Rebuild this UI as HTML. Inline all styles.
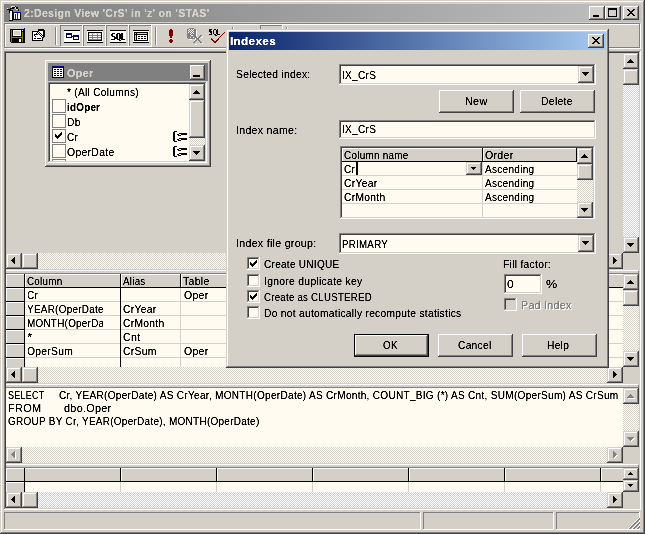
<!DOCTYPE html>
<html><head><meta charset="utf-8"><style>
html,body{margin:0;padding:0;width:645px;height:534px;overflow:hidden;background:#d4d0c8}
#r{position:relative;width:645px;height:534px;overflow:hidden}
#r div{position:absolute}
#r .t{font-family:"Liberation Sans",sans-serif;font-size:11px;line-height:13px;white-space:pre;filter:url(#th);letter-spacing:0.3px}
</style></head><body><svg width="0" height="0" style="position:absolute"><filter id="th" x="0" y="0" width="100%" height="100%"><feComponentTransfer><feFuncA type="linear" slope="2" intercept="-0.25"/></feComponentTransfer></filter></svg><div id="r">
<div style="left:0px;top:0px;width:645px;height:534px;background:#d4d0c8;"></div>
<div style="left:0px;top:0px;width:645px;height:1px;background:#d4d0c8;"></div>
<div style="left:0px;top:0px;width:1px;height:534px;background:#d4d0c8;"></div>
<div style="left:0px;top:533px;width:645px;height:1px;background:#404040;"></div>
<div style="left:644px;top:0px;width:1px;height:534px;background:#404040;"></div>
<div style="left:1px;top:1px;width:643px;height:1px;background:#ffffff;"></div>
<div style="left:1px;top:1px;width:1px;height:532px;background:#ffffff;"></div>
<div style="left:1px;top:532px;width:643px;height:1px;background:#808080;"></div>
<div style="left:643px;top:1px;width:1px;height:532px;background:#808080;"></div>
<div style="left:4px;top:4px;width:637px;height:18px;background:;background:linear-gradient(to right,#808080,#c0c0c0);"></div>
<div class="t" style="left:24.0px;top:7px;color:#d4d0c8;font-weight:bold;transform:scaleX(0.9614);transform-origin:0 0;">2:Design View 'CrS' in 'z' on 'STAS'</div>
<div style="left:589px;top:6px;width:16px;height:14px;background:#d4d0c8;"></div>
<div style="left:589px;top:6px;width:16px;height:1px;background:#ffffff;"></div>
<div style="left:589px;top:6px;width:1px;height:14px;background:#ffffff;"></div>
<div style="left:589px;top:19px;width:16px;height:1px;background:#404040;"></div>
<div style="left:604px;top:6px;width:1px;height:14px;background:#404040;"></div>
<div style="left:590px;top:7px;width:14px;height:1px;background:#d4d0c8;"></div>
<div style="left:590px;top:7px;width:1px;height:12px;background:#d4d0c8;"></div>
<div style="left:590px;top:18px;width:14px;height:1px;background:#808080;"></div>
<div style="left:603px;top:7px;width:1px;height:12px;background:#808080;"></div>
<div style="left:605px;top:6px;width:16px;height:14px;background:#d4d0c8;"></div>
<div style="left:605px;top:6px;width:16px;height:1px;background:#ffffff;"></div>
<div style="left:605px;top:6px;width:1px;height:14px;background:#ffffff;"></div>
<div style="left:605px;top:19px;width:16px;height:1px;background:#404040;"></div>
<div style="left:620px;top:6px;width:1px;height:14px;background:#404040;"></div>
<div style="left:606px;top:7px;width:14px;height:1px;background:#d4d0c8;"></div>
<div style="left:606px;top:7px;width:1px;height:12px;background:#d4d0c8;"></div>
<div style="left:606px;top:18px;width:14px;height:1px;background:#808080;"></div>
<div style="left:619px;top:7px;width:1px;height:12px;background:#808080;"></div>
<div style="left:623px;top:6px;width:16px;height:14px;background:#d4d0c8;"></div>
<div style="left:623px;top:6px;width:16px;height:1px;background:#ffffff;"></div>
<div style="left:623px;top:6px;width:1px;height:14px;background:#ffffff;"></div>
<div style="left:623px;top:19px;width:16px;height:1px;background:#404040;"></div>
<div style="left:638px;top:6px;width:1px;height:14px;background:#404040;"></div>
<div style="left:624px;top:7px;width:14px;height:1px;background:#d4d0c8;"></div>
<div style="left:624px;top:7px;width:1px;height:12px;background:#d4d0c8;"></div>
<div style="left:624px;top:18px;width:14px;height:1px;background:#808080;"></div>
<div style="left:637px;top:7px;width:1px;height:12px;background:#808080;"></div>
<div style="left:593px;top:15px;width:6px;height:2px;background:#000;"></div>
<div style="left:608px;top:8px;width:9px;height:1px;background:#000;"></div>
<div style="left:608px;top:8px;width:1px;height:9px;background:#000;"></div>
<div style="left:608px;top:16px;width:9px;height:1px;background:#000;"></div>
<div style="left:616px;top:8px;width:1px;height:9px;background:#000;"></div>
<div style="left:608px;top:9px;width:9px;height:1px;background:#000;"></div>
<div style="left:627px;top:9px;width:2px;height:1px;background:#000;"></div>
<div style="left:633px;top:9px;width:2px;height:1px;background:#000;"></div>
<div style="left:628px;top:10px;width:2px;height:1px;background:#000;"></div>
<div style="left:632px;top:10px;width:2px;height:1px;background:#000;"></div>
<div style="left:629px;top:11px;width:2px;height:1px;background:#000;"></div>
<div style="left:631px;top:11px;width:2px;height:1px;background:#000;"></div>
<div style="left:630px;top:12px;width:2px;height:1px;background:#000;"></div>
<div style="left:630px;top:12px;width:2px;height:1px;background:#000;"></div>
<div style="left:631px;top:13px;width:2px;height:1px;background:#000;"></div>
<div style="left:629px;top:13px;width:2px;height:1px;background:#000;"></div>
<div style="left:632px;top:14px;width:2px;height:1px;background:#000;"></div>
<div style="left:628px;top:14px;width:2px;height:1px;background:#000;"></div>
<div style="left:633px;top:15px;width:2px;height:1px;background:#000;"></div>
<div style="left:627px;top:15px;width:2px;height:1px;background:#000;"></div>
<div style="left:9px;top:10px;width:4px;height:11px;background:#000;"></div>
<div style="left:10px;top:11px;width:2px;height:9px;background:#ffffff;"></div>
<div style="left:9px;top:13px;width:1px;height:7px;background:#808000;"></div>
<div style="left:13px;top:12px;width:8px;height:8px;background:#000;"></div>
<div style="left:14px;top:13px;width:6px;height:6px;background:#ffffff;"></div>
<div style="left:13px;top:12px;width:8px;height:1px;background:#000080;"></div>
<div style="left:15px;top:14px;width:1px;height:5px;background:#800000;"></div>
<div style="left:17px;top:13px;width:1px;height:6px;background:#800000;"></div>
<div style="left:7px;top:9px;width:4px;height:1px;background:#000;"></div>
<div style="left:10px;top:8px;width:4px;height:1px;background:#000;"></div>
<div style="left:12px;top:7px;width:3px;height:1px;background:#000;"></div>
<div style="left:14px;top:6px;width:2px;height:1px;background:#000;"></div>
<div style="left:16px;top:7px;width:2px;height:2px;background:#000;"></div>
<div style="left:18px;top:9px;width:1px;height:2px;background:#000;"></div>
<div style="left:11px;top:6px;width:4px;height:1px;background:#e0e0e0;"></div>
<div style="left:11px;top:7px;width:1px;height:1px;background:#e0e0e0;"></div>
<div style="left:15px;top:7px;width:1px;height:2px;background:#e0e0e0;"></div>
<div style="left:16px;top:9px;width:2px;height:1px;background:#e0e0e0;"></div>
<div style="left:7px;top:8px;width:1px;height:1px;background:#ffffff;"></div>
<div style="left:5px;top:24px;width:636px;height:1px;background:#ffffff;"></div>
<div style="left:5px;top:24px;width:1px;height:25px;background:#ffffff;"></div>
<div style="left:5px;top:48px;width:636px;height:1px;background:#ffffff;"></div>
<div style="left:640px;top:24px;width:1px;height:25px;background:#ffffff;"></div>
<div style="left:4px;top:23px;width:636px;height:1px;background:#808080;"></div>
<div style="left:4px;top:23px;width:1px;height:25px;background:#808080;"></div>
<div style="left:4px;top:47px;width:636px;height:1px;background:#808080;"></div>
<div style="left:639px;top:23px;width:1px;height:25px;background:#808080;"></div>
<div style="left:55px;top:27px;width:1px;height:18px;background:#808080;"></div>
<div style="left:56px;top:27px;width:1px;height:18px;background:#ffffff;"></div>
<div style="left:155px;top:27px;width:1px;height:18px;background:#808080;"></div>
<div style="left:156px;top:27px;width:1px;height:18px;background:#ffffff;"></div>
<div style="left:60px;top:25px;width:23px;height:1px;background:#808080;"></div>
<div style="left:60px;top:25px;width:1px;height:22px;background:#808080;"></div>
<div style="left:60px;top:46px;width:23px;height:1px;background:#ffffff;"></div>
<div style="left:82px;top:25px;width:1px;height:22px;background:#ffffff;"></div>
<div style="left:83px;top:25px;width:23px;height:1px;background:#808080;"></div>
<div style="left:83px;top:25px;width:1px;height:22px;background:#808080;"></div>
<div style="left:83px;top:46px;width:23px;height:1px;background:#ffffff;"></div>
<div style="left:105px;top:25px;width:1px;height:22px;background:#ffffff;"></div>
<div style="left:106px;top:25px;width:23px;height:1px;background:#808080;"></div>
<div style="left:106px;top:25px;width:1px;height:22px;background:#808080;"></div>
<div style="left:106px;top:46px;width:23px;height:1px;background:#ffffff;"></div>
<div style="left:128px;top:25px;width:1px;height:22px;background:#ffffff;"></div>
<div style="left:129px;top:25px;width:23px;height:1px;background:#808080;"></div>
<div style="left:129px;top:25px;width:1px;height:22px;background:#808080;"></div>
<div style="left:129px;top:46px;width:23px;height:1px;background:#ffffff;"></div>
<div style="left:151px;top:25px;width:1px;height:22px;background:#ffffff;"></div>
<div style="left:10px;top:29px;width:15px;height:13px;background:#000;"></div>
<div style="left:11px;top:42px;width:14px;height:1px;background:#000;"></div>
<div style="left:11px;top:30px;width:1px;height:12px;background:#808000;"></div>
<div style="left:22px;top:32px;width:1px;height:10px;background:#808000;"></div>
<div style="left:12px;top:37px;width:10px;height:1px;background:#808000;"></div>
<div style="left:13px;top:30px;width:8px;height:6px;background:#ffffff;"></div>
<div style="left:14px;top:31px;width:6px;height:4px;background:#d4d0c8;"></div>
<div style="left:22px;top:30px;width:1px;height:1px;background:#ffffff;"></div>
<div style="left:24px;top:28px;width:1px;height:2px;background:#0000c0;"></div>
<div style="left:19px;top:39px;width:2px;height:3px;background:#ffffff;"></div>
<div style="left:32px;top:31px;width:11px;height:10px;background:#000;"></div>
<div style="left:33px;top:32px;width:9px;height:8px;background:#ffffff;"></div>
<div style="left:38px;top:29px;width:6px;height:2px;background:#000;"></div>
<div style="left:44px;top:30px;width:1px;height:7px;background:#000;"></div>
<div style="left:38px;top:31px;width:6px;height:6px;background:#ffffff;"></div>
<div style="left:34px;top:35px;width:1px;height:1px;background:#000;"></div>
<div style="left:35px;top:34px;width:1px;height:1px;background:#000;"></div>
<div style="left:36px;top:33px;width:1px;height:1px;background:#000;"></div>
<div style="left:37px;top:32px;width:1px;height:1px;background:#000;"></div>
<div style="left:38px;top:31px;width:1px;height:1px;background:#000;"></div>
<div style="left:39px;top:32px;width:1px;height:1px;background:#000;"></div>
<div style="left:40px;top:33px;width:1px;height:1px;background:#000;"></div>
<div style="left:41px;top:34px;width:1px;height:1px;background:#000;"></div>
<div style="left:42px;top:35px;width:1px;height:1px;background:#000;"></div>
<div style="left:35px;top:36px;width:1px;height:1px;background:#000;"></div>
<div style="left:34px;top:34px;width:1px;height:1px;background:#000;"></div>
<div style="left:36px;top:34px;width:1px;height:1px;background:#000;"></div>
<div style="left:38px;top:33px;width:1px;height:1px;background:#000;"></div>
<div style="left:37px;top:34px;width:1px;height:1px;background:#000;"></div>
<div style="left:40px;top:35px;width:1px;height:1px;background:#000;"></div>
<div style="left:41px;top:36px;width:1px;height:1px;background:#000;"></div>
<div style="left:39px;top:34px;width:1px;height:1px;background:#000;"></div>
<div style="left:42px;top:37px;width:2px;height:1px;background:#000;"></div>
<div style="left:43px;top:31px;width:1px;height:6px;background:#000;"></div>
<div style="left:34px;top:38px;width:2px;height:1px;background:#000;"></div>
<div style="left:37px;top:38px;width:4px;height:1px;background:#000;"></div>
<div style="left:64px;top:30px;width:16px;height:1px;background:#000;"></div>
<div style="left:64px;top:42px;width:16px;height:1px;background:#000;"></div>
<div style="left:64px;top:31px;width:16px;height:11px;background:#ffffff;"></div>
<div style="left:66px;top:33px;width:6px;height:5px;background:#000;"></div>
<div style="left:67px;top:35px;width:4px;height:2px;background:#ffffff;"></div>
<div style="left:66px;top:33px;width:6px;height:2px;background:#000080;"></div>
<div style="left:73px;top:35px;width:6px;height:5px;background:#000;"></div>
<div style="left:74px;top:37px;width:4px;height:2px;background:#ffffff;"></div>
<div style="left:73px;top:35px;width:6px;height:2px;background:#000080;"></div>
<div style="left:72px;top:36px;width:1px;height:1px;background:#000;"></div>
<div style="left:87px;top:30px;width:16px;height:1px;background:#000;"></div>
<div style="left:87px;top:42px;width:16px;height:1px;background:#000;"></div>
<div style="left:87px;top:31px;width:16px;height:11px;background:#ffffff;"></div>
<div style="left:88px;top:32px;width:14px;height:9px;background:#000;"></div>
<div style="left:89px;top:33px;width:12px;height:7px;background:#808080;"></div>
<div style="left:89px;top:33px;width:12px;height:1px;background:#d4d0c8;"></div>
<div style="left:89px;top:34px;width:3px;height:1px;background:#ffffff;"></div>
<div style="left:93px;top:34px;width:4px;height:1px;background:#ffffff;"></div>
<div style="left:98px;top:34px;width:3px;height:1px;background:#ffffff;"></div>
<div style="left:89px;top:36px;width:3px;height:1px;background:#ffffff;"></div>
<div style="left:93px;top:36px;width:4px;height:1px;background:#ffffff;"></div>
<div style="left:98px;top:36px;width:3px;height:1px;background:#ffffff;"></div>
<div style="left:89px;top:38px;width:3px;height:1px;background:#ffffff;"></div>
<div style="left:93px;top:38px;width:4px;height:1px;background:#ffffff;"></div>
<div style="left:98px;top:38px;width:3px;height:1px;background:#ffffff;"></div>
<div style="left:90px;top:33px;width:1px;height:1px;background:#ffffff;"></div>
<div style="left:95px;top:33px;width:1px;height:1px;background:#ffffff;"></div>
<div style="left:99px;top:33px;width:1px;height:1px;background:#ffffff;"></div>
<div style="left:110px;top:30px;width:16px;height:1px;background:#000;"></div>
<div style="left:110px;top:42px;width:16px;height:1px;background:#000;"></div>
<div style="left:110px;top:31px;width:16px;height:11px;background:#ffffff;"></div>
<div style="left:112px;top:33px;width:3px;height:1px;background:#000;"></div>
<div style="left:111px;top:34px;width:2px;height:2px;background:#000;"></div>
<div style="left:112px;top:36px;width:3px;height:1px;background:#000;"></div>
<div style="left:114px;top:37px;width:2px;height:2px;background:#000;"></div>
<div style="left:111px;top:39px;width:4px;height:1px;background:#000;"></div>
<div style="left:117px;top:33px;width:3px;height:1px;background:#000;"></div>
<div style="left:116px;top:34px;width:2px;height:5px;background:#000;"></div>
<div style="left:119px;top:34px;width:2px;height:5px;background:#000;"></div>
<div style="left:117px;top:39px;width:3px;height:1px;background:#000;"></div>
<div style="left:119px;top:40px;width:2px;height:1px;background:#000;"></div>
<div style="left:121px;top:33px;width:2px;height:7px;background:#000;"></div>
<div style="left:121px;top:39px;width:4px;height:1px;background:#000;"></div>
<div style="left:133px;top:30px;width:16px;height:1px;background:#000;"></div>
<div style="left:133px;top:42px;width:16px;height:1px;background:#000;"></div>
<div style="left:133px;top:31px;width:16px;height:11px;background:#ffffff;"></div>
<div style="left:134px;top:32px;width:14px;height:9px;background:#000;"></div>
<div style="left:137px;top:35px;width:10px;height:5px;background:#ffffff;"></div>
<div style="left:135px;top:33px;width:1px;height:1px;background:#d4d0c8;"></div>
<div style="left:137px;top:33px;width:10px;height:1px;background:#d4d0c8;"></div>
<div style="left:135px;top:35px;width:1px;height:5px;background:#d4d0c8;"></div>
<div style="left:138px;top:36px;width:2px;height:1px;background:#000;"></div>
<div style="left:141px;top:36px;width:2px;height:1px;background:#000;"></div>
<div style="left:144px;top:36px;width:2px;height:1px;background:#000;"></div>
<div style="left:138px;top:38px;width:2px;height:1px;background:#000;"></div>
<div style="left:141px;top:38px;width:2px;height:1px;background:#000;"></div>
<div style="left:144px;top:38px;width:2px;height:1px;background:#000;"></div>
<div style="left:170px;top:29px;width:2px;height:1px;background:#800000;"></div>
<div style="left:169px;top:30px;width:4px;height:6px;background:#800000;"></div>
<div style="left:170px;top:36px;width:2px;height:2px;background:#800000;"></div>
<div style="left:170px;top:39px;width:2px;height:1px;background:#800000;"></div>
<div style="left:169px;top:40px;width:4px;height:2px;background:#800000;"></div>
<div style="left:170px;top:42px;width:2px;height:1px;background:#800000;"></div>
<div style="left:189px;top:28px;width:5px;height:1px;background:#808080;"></div>
<div style="left:187px;top:29px;width:9px;height:9px;background:#808080;"></div>
<div style="left:188px;top:38px;width:7px;height:1px;background:#808080;"></div>
<div style="left:189px;top:29px;width:1px;height:1px;background:#ffffff;"></div>
<div style="left:191px;top:29px;width:1px;height:1px;background:#ffffff;"></div>
<div style="left:193px;top:29px;width:1px;height:1px;background:#ffffff;"></div>
<div style="left:188px;top:30px;width:1px;height:1px;background:#ffffff;"></div>
<div style="left:190px;top:30px;width:1px;height:1px;background:#ffffff;"></div>
<div style="left:192px;top:30px;width:1px;height:1px;background:#ffffff;"></div>
<div style="left:189px;top:31px;width:1px;height:1px;background:#ffffff;"></div>
<div style="left:191px;top:31px;width:1px;height:1px;background:#ffffff;"></div>
<div style="left:193px;top:31px;width:1px;height:1px;background:#ffffff;"></div>
<div style="left:188px;top:32px;width:1px;height:1px;background:#ffffff;"></div>
<div style="left:190px;top:32px;width:1px;height:1px;background:#ffffff;"></div>
<div style="left:192px;top:32px;width:1px;height:1px;background:#ffffff;"></div>
<div style="left:191px;top:33px;width:1px;height:1px;background:#ffffff;"></div>
<div style="left:193px;top:33px;width:1px;height:1px;background:#ffffff;"></div>
<div style="left:190px;top:34px;width:1px;height:1px;background:#ffffff;"></div>
<div style="left:190px;top:37px;width:1px;height:1px;background:#ffffff;"></div>
<div style="left:193px;top:37px;width:1px;height:1px;background:#ffffff;"></div>
<div style="left:191px;top:35px;width:3px;height:1px;background:#ffffff;"></div>
<div style="left:193px;top:35px;width:2px;height:1px;background:#808080;"></div>
<div style="left:200px;top:35px;width:2px;height:1px;background:#808080;"></div>
<div style="left:194px;top:36px;width:2px;height:1px;background:#808080;"></div>
<div style="left:199px;top:36px;width:2px;height:1px;background:#808080;"></div>
<div style="left:195px;top:37px;width:2px;height:1px;background:#808080;"></div>
<div style="left:198px;top:37px;width:2px;height:1px;background:#808080;"></div>
<div style="left:196px;top:38px;width:2px;height:1px;background:#808080;"></div>
<div style="left:197px;top:38px;width:2px;height:1px;background:#808080;"></div>
<div style="left:197px;top:39px;width:2px;height:1px;background:#808080;"></div>
<div style="left:196px;top:39px;width:2px;height:1px;background:#808080;"></div>
<div style="left:198px;top:40px;width:2px;height:1px;background:#808080;"></div>
<div style="left:195px;top:40px;width:2px;height:1px;background:#808080;"></div>
<div style="left:199px;top:41px;width:2px;height:1px;background:#808080;"></div>
<div style="left:194px;top:41px;width:2px;height:1px;background:#808080;"></div>
<div style="left:200px;top:42px;width:2px;height:1px;background:#808080;"></div>
<div style="left:193px;top:42px;width:2px;height:1px;background:#808080;"></div>
<div style="left:196px;top:30px;width:1px;height:6px;background:#ffffff;"></div>
<div style="left:195px;top:38px;width:1px;height:2px;background:#ffffff;"></div>
<div style="left:202px;top:36px;width:1px;height:1px;background:#ffffff;"></div>
<div style="left:201px;top:37px;width:1px;height:1px;background:#ffffff;"></div>
<div style="left:202px;top:43px;width:1px;height:1px;background:#ffffff;"></div>
<div style="left:195px;top:44px;width:2px;height:1px;background:#ffffff;"></div>
<div style="left:189px;top:39px;width:3px;height:1px;background:#ffffff;"></div>
<div style="left:197px;top:37px;width:1px;height:1px;background:#ffffff;"></div>
<div style="left:194px;top:40px;width:1px;height:1px;background:#ffffff;"></div>
<div style="left:209px;top:29px;width:3px;height:1px;background:#000;"></div>
<div style="left:209px;top:30px;width:2px;height:1px;background:#000;"></div>
<div style="left:209px;top:31px;width:3px;height:1px;background:#000;"></div>
<div style="left:211px;top:32px;width:1px;height:2px;background:#000;"></div>
<div style="left:210px;top:32px;width:1px;height:1px;background:#000;"></div>
<div style="left:209px;top:34px;width:3px;height:1px;background:#000;"></div>
<div style="left:214px;top:29px;width:2px;height:1px;background:#000;"></div>
<div style="left:213px;top:30px;width:1px;height:4px;background:#000;"></div>
<div style="left:216px;top:30px;width:1px;height:4px;background:#000;"></div>
<div style="left:214px;top:34px;width:2px;height:1px;background:#000;"></div>
<div style="left:215px;top:35px;width:2px;height:1px;background:#000;"></div>
<div style="left:217px;top:29px;width:1px;height:6px;background:#000;"></div>
<div style="left:218px;top:34px;width:2px;height:1px;background:#000;"></div>
<div style="left:211px;top:38px;width:1px;height:1px;background:#800000;"></div>
<div style="left:211px;top:39px;width:2px;height:1px;background:#800000;"></div>
<div style="left:212px;top:40px;width:2px;height:1px;background:#800000;"></div>
<div style="left:213px;top:41px;width:2px;height:1px;background:#800000;"></div>
<div style="left:214px;top:42px;width:2px;height:1px;background:#800000;"></div>
<div style="left:215px;top:41px;width:2px;height:1px;background:#800000;"></div>
<div style="left:216px;top:40px;width:2px;height:1px;background:#800000;"></div>
<div style="left:217px;top:39px;width:2px;height:1px;background:#800000;"></div>
<div style="left:218px;top:38px;width:1px;height:1px;background:#800000;"></div>
<div style="left:219px;top:37px;width:1px;height:1px;background:#800000;"></div>
<div style="left:220px;top:36px;width:1px;height:1px;background:#800000;"></div>
<div style="left:221px;top:35px;width:1px;height:1px;background:#800000;"></div>
<div style="left:222px;top:34px;width:1px;height:1px;background:#800000;"></div>
<div style="left:223px;top:33px;width:1px;height:1px;background:#800000;"></div>
<div style="left:224px;top:32px;width:1px;height:1px;background:#800000;"></div>
<div style="left:232px;top:27px;width:1px;height:2px;background:#808080;"></div>
<div style="left:286px;top:27px;width:1px;height:2px;background:#808080;"></div>
<div style="left:233px;top:27px;width:1px;height:2px;background:#ffffff;"></div>
<div style="left:287px;top:27px;width:1px;height:2px;background:#ffffff;"></div>
<div style="left:260px;top:25px;width:23px;height:1px;background:#808080;"></div>
<div style="left:260px;top:25px;width:1px;height:22px;background:#808080;"></div>
<div style="left:260px;top:46px;width:23px;height:1px;background:#ffffff;"></div>
<div style="left:282px;top:25px;width:1px;height:22px;background:#ffffff;"></div>
<div style="left:4px;top:51px;width:1px;height:459px;background:#808080;"></div>
<div style="left:4px;top:51px;width:637px;height:1px;background:#808080;"></div>
<div style="left:5px;top:52px;width:1px;height:457px;background:#404040;"></div>
<div style="left:5px;top:52px;width:635px;height:1px;background:#404040;"></div>
<div style="left:639px;top:52px;width:1px;height:457px;background:#d4d0c8;"></div>
<div style="left:5px;top:508px;width:635px;height:1px;background:#d4d0c8;"></div>
<div style="left:640px;top:51px;width:1px;height:459px;background:#ffffff;"></div>
<div style="left:4px;top:509px;width:637px;height:1px;background:#ffffff;"></div>
<div style="left:6px;top:53px;width:633px;height:216px;background:#d4d0c8;"></div>
<div style="left:623px;top:53px;width:16px;height:200px;background:#ffffff;background-image:conic-gradient(#d4d0c8 25%,#fff 0 50%,#d4d0c8 0 75%,#fff 0);background-size:2px 2px;"></div>
<div style="left:623px;top:53px;width:16px;height:16px;background:#d4d0c8;"></div>
<div style="left:623px;top:53px;width:16px;height:1px;background:#d4d0c8;"></div>
<div style="left:623px;top:53px;width:1px;height:16px;background:#d4d0c8;"></div>
<div style="left:623px;top:68px;width:16px;height:1px;background:#404040;"></div>
<div style="left:638px;top:53px;width:1px;height:16px;background:#404040;"></div>
<div style="left:624px;top:54px;width:14px;height:1px;background:#ffffff;"></div>
<div style="left:624px;top:54px;width:1px;height:14px;background:#ffffff;"></div>
<div style="left:624px;top:67px;width:14px;height:1px;background:#808080;"></div>
<div style="left:637px;top:54px;width:1px;height:14px;background:#808080;"></div>
<div style="left:623px;top:237px;width:16px;height:16px;background:#d4d0c8;"></div>
<div style="left:623px;top:237px;width:16px;height:1px;background:#d4d0c8;"></div>
<div style="left:623px;top:237px;width:1px;height:16px;background:#d4d0c8;"></div>
<div style="left:623px;top:252px;width:16px;height:1px;background:#404040;"></div>
<div style="left:638px;top:237px;width:1px;height:16px;background:#404040;"></div>
<div style="left:624px;top:238px;width:14px;height:1px;background:#ffffff;"></div>
<div style="left:624px;top:238px;width:1px;height:14px;background:#ffffff;"></div>
<div style="left:624px;top:251px;width:14px;height:1px;background:#808080;"></div>
<div style="left:637px;top:238px;width:1px;height:14px;background:#808080;"></div>
<div style="left:630px;top:59px;width:1px;height:1px;background:#000;"></div>
<div style="left:629px;top:60px;width:3px;height:1px;background:#000;"></div>
<div style="left:628px;top:61px;width:5px;height:1px;background:#000;"></div>
<div style="left:627px;top:62px;width:7px;height:1px;background:#000;"></div>
<div style="left:627px;top:243px;width:7px;height:1px;background:#000;"></div>
<div style="left:628px;top:244px;width:5px;height:1px;background:#000;"></div>
<div style="left:629px;top:245px;width:3px;height:1px;background:#000;"></div>
<div style="left:630px;top:246px;width:1px;height:1px;background:#000;"></div>
<div style="left:623px;top:69px;width:16px;height:16px;background:#d4d0c8;"></div>
<div style="left:623px;top:69px;width:16px;height:1px;background:#d4d0c8;"></div>
<div style="left:623px;top:69px;width:1px;height:16px;background:#d4d0c8;"></div>
<div style="left:623px;top:84px;width:16px;height:1px;background:#404040;"></div>
<div style="left:638px;top:69px;width:1px;height:16px;background:#404040;"></div>
<div style="left:624px;top:70px;width:14px;height:1px;background:#ffffff;"></div>
<div style="left:624px;top:70px;width:1px;height:14px;background:#ffffff;"></div>
<div style="left:624px;top:83px;width:14px;height:1px;background:#808080;"></div>
<div style="left:637px;top:70px;width:1px;height:14px;background:#808080;"></div>
<div style="left:6px;top:253px;width:617px;height:16px;background:#ffffff;background-image:conic-gradient(#d4d0c8 25%,#fff 0 50%,#d4d0c8 0 75%,#fff 0);background-size:2px 2px;"></div>
<div style="left:6px;top:253px;width:16px;height:16px;background:#d4d0c8;"></div>
<div style="left:6px;top:253px;width:16px;height:1px;background:#d4d0c8;"></div>
<div style="left:6px;top:253px;width:1px;height:16px;background:#d4d0c8;"></div>
<div style="left:6px;top:268px;width:16px;height:1px;background:#404040;"></div>
<div style="left:21px;top:253px;width:1px;height:16px;background:#404040;"></div>
<div style="left:7px;top:254px;width:14px;height:1px;background:#ffffff;"></div>
<div style="left:7px;top:254px;width:1px;height:14px;background:#ffffff;"></div>
<div style="left:7px;top:267px;width:14px;height:1px;background:#808080;"></div>
<div style="left:20px;top:254px;width:1px;height:14px;background:#808080;"></div>
<div style="left:607px;top:253px;width:16px;height:16px;background:#d4d0c8;"></div>
<div style="left:607px;top:253px;width:16px;height:1px;background:#d4d0c8;"></div>
<div style="left:607px;top:253px;width:1px;height:16px;background:#d4d0c8;"></div>
<div style="left:607px;top:268px;width:16px;height:1px;background:#404040;"></div>
<div style="left:622px;top:253px;width:1px;height:16px;background:#404040;"></div>
<div style="left:608px;top:254px;width:14px;height:1px;background:#ffffff;"></div>
<div style="left:608px;top:254px;width:1px;height:14px;background:#ffffff;"></div>
<div style="left:608px;top:267px;width:14px;height:1px;background:#808080;"></div>
<div style="left:621px;top:254px;width:1px;height:14px;background:#808080;"></div>
<div style="left:11px;top:260px;width:1px;height:1px;background:#000;"></div>
<div style="left:12px;top:259px;width:1px;height:3px;background:#000;"></div>
<div style="left:13px;top:258px;width:1px;height:5px;background:#000;"></div>
<div style="left:14px;top:257px;width:1px;height:7px;background:#000;"></div>
<div style="left:613px;top:257px;width:1px;height:7px;background:#000;"></div>
<div style="left:614px;top:258px;width:1px;height:5px;background:#000;"></div>
<div style="left:615px;top:259px;width:1px;height:3px;background:#000;"></div>
<div style="left:616px;top:260px;width:1px;height:1px;background:#000;"></div>
<div style="left:22px;top:253px;width:16px;height:16px;background:#d4d0c8;"></div>
<div style="left:22px;top:253px;width:16px;height:1px;background:#d4d0c8;"></div>
<div style="left:22px;top:253px;width:1px;height:16px;background:#d4d0c8;"></div>
<div style="left:22px;top:268px;width:16px;height:1px;background:#404040;"></div>
<div style="left:37px;top:253px;width:1px;height:16px;background:#404040;"></div>
<div style="left:23px;top:254px;width:14px;height:1px;background:#ffffff;"></div>
<div style="left:23px;top:254px;width:1px;height:14px;background:#ffffff;"></div>
<div style="left:23px;top:267px;width:14px;height:1px;background:#808080;"></div>
<div style="left:36px;top:254px;width:1px;height:14px;background:#808080;"></div>
<div style="left:6px;top:269px;width:633px;height:5px;background:#d4d0c8;"></div>
<div style="left:6px;top:270px;width:632px;height:1px;background:#ffffff;"></div>
<div style="left:6px;top:273px;width:632px;height:1px;background:#808080;"></div>
<div style="left:638px;top:271px;width:1px;height:3px;background:#808080;"></div>
<div style="left:45px;top:60px;width:166px;height:107px;background:#d4d0c8;"></div>
<div style="left:45px;top:60px;width:166px;height:1px;background:#ffffff;"></div>
<div style="left:45px;top:60px;width:1px;height:107px;background:#ffffff;"></div>
<div style="left:45px;top:166px;width:166px;height:1px;background:#404040;"></div>
<div style="left:210px;top:60px;width:1px;height:107px;background:#404040;"></div>
<div style="left:46px;top:61px;width:164px;height:1px;background:#d4d0c8;"></div>
<div style="left:46px;top:61px;width:1px;height:105px;background:#d4d0c8;"></div>
<div style="left:46px;top:165px;width:164px;height:1px;background:#808080;"></div>
<div style="left:209px;top:61px;width:1px;height:105px;background:#808080;"></div>
<div style="left:48px;top:63px;width:160px;height:18px;background:#808080;"></div>
<div style="left:52px;top:66px;width:12px;height:12px;background:#000;"></div>
<div style="left:52px;top:66px;width:12px;height:2px;background:#000080;"></div>
<div style="left:53px;top:68px;width:10px;height:9px;background:#ffffff;"></div>
<div style="left:54px;top:69px;width:2px;height:1px;background:#000;"></div>
<div style="left:57px;top:69px;width:2px;height:1px;background:#000;"></div>
<div style="left:60px;top:69px;width:2px;height:1px;background:#000;"></div>
<div style="left:54px;top:71px;width:2px;height:1px;background:#000;"></div>
<div style="left:57px;top:71px;width:2px;height:1px;background:#000;"></div>
<div style="left:60px;top:71px;width:2px;height:1px;background:#000;"></div>
<div style="left:54px;top:73px;width:2px;height:1px;background:#000;"></div>
<div style="left:57px;top:73px;width:2px;height:1px;background:#000;"></div>
<div style="left:60px;top:73px;width:2px;height:1px;background:#000;"></div>
<div style="left:54px;top:75px;width:2px;height:1px;background:#000;"></div>
<div style="left:57px;top:75px;width:2px;height:1px;background:#000;"></div>
<div style="left:60px;top:75px;width:2px;height:1px;background:#000;"></div>
<div class="t" style="left:67.0px;top:67px;color:#d4d0c8;font-weight:bold;transform:scaleX(0.9860);transform-origin:0 0;">Oper</div>
<div style="left:190px;top:65px;width:15px;height:15px;background:#d4d0c8;"></div>
<div style="left:190px;top:65px;width:15px;height:1px;background:#ffffff;"></div>
<div style="left:190px;top:65px;width:1px;height:15px;background:#ffffff;"></div>
<div style="left:190px;top:79px;width:15px;height:1px;background:#404040;"></div>
<div style="left:204px;top:65px;width:1px;height:15px;background:#404040;"></div>
<div style="left:191px;top:66px;width:13px;height:1px;background:#d4d0c8;"></div>
<div style="left:191px;top:66px;width:1px;height:13px;background:#d4d0c8;"></div>
<div style="left:191px;top:78px;width:13px;height:1px;background:#808080;"></div>
<div style="left:203px;top:66px;width:1px;height:13px;background:#808080;"></div>
<div style="left:193px;top:75px;width:7px;height:2px;background:#000;"></div>
<div style="left:48px;top:82px;width:159px;height:81px;background:#fffbf0;"></div>
<div style="left:48px;top:82px;width:159px;height:1px;background:#808080;"></div>
<div style="left:48px;top:82px;width:1px;height:81px;background:#808080;"></div>
<div style="left:48px;top:162px;width:159px;height:1px;background:#ffffff;"></div>
<div style="left:206px;top:82px;width:1px;height:81px;background:#ffffff;"></div>
<div style="left:49px;top:83px;width:157px;height:1px;background:#404040;"></div>
<div style="left:49px;top:83px;width:1px;height:79px;background:#404040;"></div>
<div style="left:49px;top:161px;width:157px;height:1px;background:#d4d0c8;"></div>
<div style="left:205px;top:83px;width:1px;height:79px;background:#d4d0c8;"></div>
<div style="left:189px;top:84px;width:16px;height:77px;background:#ffffff;background-image:conic-gradient(#d4d0c8 25%,#fff 0 50%,#d4d0c8 0 75%,#fff 0);background-size:2px 2px;"></div>
<div style="left:189px;top:84px;width:16px;height:16px;background:#d4d0c8;"></div>
<div style="left:189px;top:84px;width:16px;height:1px;background:#d4d0c8;"></div>
<div style="left:189px;top:84px;width:1px;height:16px;background:#d4d0c8;"></div>
<div style="left:189px;top:99px;width:16px;height:1px;background:#404040;"></div>
<div style="left:204px;top:84px;width:1px;height:16px;background:#404040;"></div>
<div style="left:190px;top:85px;width:14px;height:1px;background:#ffffff;"></div>
<div style="left:190px;top:85px;width:1px;height:14px;background:#ffffff;"></div>
<div style="left:190px;top:98px;width:14px;height:1px;background:#808080;"></div>
<div style="left:203px;top:85px;width:1px;height:14px;background:#808080;"></div>
<div style="left:189px;top:145px;width:16px;height:16px;background:#d4d0c8;"></div>
<div style="left:189px;top:145px;width:16px;height:1px;background:#d4d0c8;"></div>
<div style="left:189px;top:145px;width:1px;height:16px;background:#d4d0c8;"></div>
<div style="left:189px;top:160px;width:16px;height:1px;background:#404040;"></div>
<div style="left:204px;top:145px;width:1px;height:16px;background:#404040;"></div>
<div style="left:190px;top:146px;width:14px;height:1px;background:#ffffff;"></div>
<div style="left:190px;top:146px;width:1px;height:14px;background:#ffffff;"></div>
<div style="left:190px;top:159px;width:14px;height:1px;background:#808080;"></div>
<div style="left:203px;top:146px;width:1px;height:14px;background:#808080;"></div>
<div style="left:196px;top:90px;width:1px;height:1px;background:#000;"></div>
<div style="left:195px;top:91px;width:3px;height:1px;background:#000;"></div>
<div style="left:194px;top:92px;width:5px;height:1px;background:#000;"></div>
<div style="left:193px;top:93px;width:7px;height:1px;background:#000;"></div>
<div style="left:193px;top:151px;width:7px;height:1px;background:#000;"></div>
<div style="left:194px;top:152px;width:5px;height:1px;background:#000;"></div>
<div style="left:195px;top:153px;width:3px;height:1px;background:#000;"></div>
<div style="left:196px;top:154px;width:1px;height:1px;background:#000;"></div>
<div style="left:189px;top:100px;width:16px;height:38px;background:#d4d0c8;"></div>
<div style="left:189px;top:100px;width:16px;height:1px;background:#d4d0c8;"></div>
<div style="left:189px;top:100px;width:1px;height:38px;background:#d4d0c8;"></div>
<div style="left:189px;top:137px;width:16px;height:1px;background:#404040;"></div>
<div style="left:204px;top:100px;width:1px;height:38px;background:#404040;"></div>
<div style="left:190px;top:101px;width:14px;height:1px;background:#ffffff;"></div>
<div style="left:190px;top:101px;width:1px;height:36px;background:#ffffff;"></div>
<div style="left:190px;top:136px;width:14px;height:1px;background:#808080;"></div>
<div style="left:203px;top:101px;width:1px;height:36px;background:#808080;"></div>
<div class="t" style="left:67.0px;top:86px;color:#000;transform:scaleX(0.9235);transform-origin:0 0;">* (All Columns)</div>
<div style="left:52px;top:99px;width:14px;height:1px;background:#808080;"></div>
<div style="left:52px;top:99px;width:1px;height:14px;background:#808080;"></div>
<div style="left:52px;top:112px;width:14px;height:1px;background:#808080;"></div>
<div style="left:65px;top:99px;width:1px;height:14px;background:#808080;"></div>
<div class="t" style="left:67.0px;top:101px;color:#000;font-weight:bold;transform:scaleX(0.8913);transform-origin:0 0;">idOper</div>
<div style="left:52px;top:114px;width:14px;height:1px;background:#808080;"></div>
<div style="left:52px;top:114px;width:1px;height:14px;background:#808080;"></div>
<div style="left:52px;top:127px;width:14px;height:1px;background:#808080;"></div>
<div style="left:65px;top:114px;width:1px;height:14px;background:#808080;"></div>
<div class="t" style="left:67.0px;top:116px;color:#000;transform:scaleX(0.9338);transform-origin:0 0;">Db</div>
<div style="left:52px;top:129px;width:14px;height:1px;background:#808080;"></div>
<div style="left:52px;top:129px;width:1px;height:14px;background:#808080;"></div>
<div style="left:52px;top:142px;width:14px;height:1px;background:#808080;"></div>
<div style="left:65px;top:129px;width:1px;height:14px;background:#808080;"></div>
<div style="left:61px;top:132px;width:1px;height:1px;background:#000;"></div>
<div style="left:60px;top:133px;width:1px;height:1px;background:#000;"></div>
<div style="left:61px;top:133px;width:1px;height:1px;background:#000;"></div>
<div style="left:55px;top:134px;width:1px;height:1px;background:#000;"></div>
<div style="left:59px;top:134px;width:1px;height:1px;background:#000;"></div>
<div style="left:60px;top:134px;width:1px;height:1px;background:#000;"></div>
<div style="left:61px;top:134px;width:1px;height:1px;background:#000;"></div>
<div style="left:55px;top:135px;width:1px;height:1px;background:#000;"></div>
<div style="left:56px;top:135px;width:1px;height:1px;background:#000;"></div>
<div style="left:58px;top:135px;width:1px;height:1px;background:#000;"></div>
<div style="left:59px;top:135px;width:1px;height:1px;background:#000;"></div>
<div style="left:60px;top:135px;width:1px;height:1px;background:#000;"></div>
<div style="left:55px;top:136px;width:1px;height:1px;background:#000;"></div>
<div style="left:56px;top:136px;width:1px;height:1px;background:#000;"></div>
<div style="left:57px;top:136px;width:1px;height:1px;background:#000;"></div>
<div style="left:58px;top:136px;width:1px;height:1px;background:#000;"></div>
<div style="left:59px;top:136px;width:1px;height:1px;background:#000;"></div>
<div style="left:56px;top:137px;width:1px;height:1px;background:#000;"></div>
<div style="left:57px;top:137px;width:1px;height:1px;background:#000;"></div>
<div style="left:58px;top:137px;width:1px;height:1px;background:#000;"></div>
<div style="left:57px;top:138px;width:1px;height:1px;background:#000;"></div>
<div class="t" style="left:67.0px;top:131px;color:#000;transform:scaleX(0.9084);transform-origin:0 0;">Cr</div>
<div style="left:52px;top:144px;width:14px;height:1px;background:#808080;"></div>
<div style="left:52px;top:144px;width:1px;height:14px;background:#808080;"></div>
<div style="left:52px;top:157px;width:14px;height:1px;background:#808080;"></div>
<div style="left:65px;top:144px;width:1px;height:14px;background:#808080;"></div>
<div class="t" style="left:67.0px;top:146px;color:#000;transform:scaleX(0.9482);transform-origin:0 0;">OperDate</div>
<div style="left:52px;top:159px;width:14px;height:1px;background:#808080;"></div>
<div style="left:52px;top:160px;width:1px;height:1px;background:#808080;"></div>
<div style="left:65px;top:160px;width:1px;height:1px;background:#808080;"></div>
<div style="left:173px;top:132px;width:1px;height:9px;background:#000;"></div>
<div style="left:174px;top:131px;width:1px;height:11px;background:#000;"></div>
<div style="left:175px;top:131px;width:2px;height:1px;background:#000;"></div>
<div style="left:175px;top:141px;width:2px;height:1px;background:#000;"></div>
<div style="left:179px;top:133px;width:2px;height:1px;background:#000;"></div>
<div style="left:177px;top:134px;width:2px;height:1px;background:#000;"></div>
<div style="left:178px;top:135px;width:3px;height:1px;background:#000;"></div>
<div style="left:181px;top:133px;width:6px;height:2px;background:#000;"></div>
<div style="left:179px;top:138px;width:2px;height:1px;background:#000;"></div>
<div style="left:177px;top:139px;width:2px;height:1px;background:#000;"></div>
<div style="left:178px;top:140px;width:3px;height:1px;background:#000;"></div>
<div style="left:181px;top:138px;width:6px;height:2px;background:#000;"></div>
<div style="left:173px;top:147px;width:1px;height:9px;background:#000;"></div>
<div style="left:174px;top:146px;width:1px;height:11px;background:#000;"></div>
<div style="left:175px;top:146px;width:2px;height:1px;background:#000;"></div>
<div style="left:175px;top:156px;width:2px;height:1px;background:#000;"></div>
<div style="left:179px;top:148px;width:2px;height:1px;background:#000;"></div>
<div style="left:177px;top:149px;width:2px;height:1px;background:#000;"></div>
<div style="left:178px;top:150px;width:3px;height:1px;background:#000;"></div>
<div style="left:181px;top:148px;width:6px;height:2px;background:#000;"></div>
<div style="left:179px;top:153px;width:2px;height:1px;background:#000;"></div>
<div style="left:177px;top:154px;width:2px;height:1px;background:#000;"></div>
<div style="left:178px;top:155px;width:3px;height:1px;background:#000;"></div>
<div style="left:181px;top:153px;width:6px;height:2px;background:#000;"></div>
<div style="left:6px;top:274px;width:633px;height:109px;background:#fffbf0;"></div>
<div style="left:623px;top:274px;width:16px;height:93px;background:#ffffff;background-image:conic-gradient(#d4d0c8 25%,#fff 0 50%,#d4d0c8 0 75%,#fff 0);background-size:2px 2px;"></div>
<div style="left:623px;top:274px;width:16px;height:16px;background:#d4d0c8;"></div>
<div style="left:623px;top:274px;width:16px;height:1px;background:#d4d0c8;"></div>
<div style="left:623px;top:274px;width:1px;height:16px;background:#d4d0c8;"></div>
<div style="left:623px;top:289px;width:16px;height:1px;background:#404040;"></div>
<div style="left:638px;top:274px;width:1px;height:16px;background:#404040;"></div>
<div style="left:624px;top:275px;width:14px;height:1px;background:#ffffff;"></div>
<div style="left:624px;top:275px;width:1px;height:14px;background:#ffffff;"></div>
<div style="left:624px;top:288px;width:14px;height:1px;background:#808080;"></div>
<div style="left:637px;top:275px;width:1px;height:14px;background:#808080;"></div>
<div style="left:623px;top:351px;width:16px;height:16px;background:#d4d0c8;"></div>
<div style="left:623px;top:351px;width:16px;height:1px;background:#d4d0c8;"></div>
<div style="left:623px;top:351px;width:1px;height:16px;background:#d4d0c8;"></div>
<div style="left:623px;top:366px;width:16px;height:1px;background:#404040;"></div>
<div style="left:638px;top:351px;width:1px;height:16px;background:#404040;"></div>
<div style="left:624px;top:352px;width:14px;height:1px;background:#ffffff;"></div>
<div style="left:624px;top:352px;width:1px;height:14px;background:#ffffff;"></div>
<div style="left:624px;top:365px;width:14px;height:1px;background:#808080;"></div>
<div style="left:637px;top:352px;width:1px;height:14px;background:#808080;"></div>
<div style="left:630px;top:280px;width:1px;height:1px;background:#000;"></div>
<div style="left:629px;top:281px;width:3px;height:1px;background:#000;"></div>
<div style="left:628px;top:282px;width:5px;height:1px;background:#000;"></div>
<div style="left:627px;top:283px;width:7px;height:1px;background:#000;"></div>
<div style="left:627px;top:357px;width:7px;height:1px;background:#000;"></div>
<div style="left:628px;top:358px;width:5px;height:1px;background:#000;"></div>
<div style="left:629px;top:359px;width:3px;height:1px;background:#000;"></div>
<div style="left:630px;top:360px;width:1px;height:1px;background:#000;"></div>
<div style="left:623px;top:290px;width:16px;height:16px;background:#d4d0c8;"></div>
<div style="left:623px;top:290px;width:16px;height:1px;background:#d4d0c8;"></div>
<div style="left:623px;top:290px;width:1px;height:16px;background:#d4d0c8;"></div>
<div style="left:623px;top:305px;width:16px;height:1px;background:#404040;"></div>
<div style="left:638px;top:290px;width:1px;height:16px;background:#404040;"></div>
<div style="left:624px;top:291px;width:14px;height:1px;background:#ffffff;"></div>
<div style="left:624px;top:291px;width:1px;height:14px;background:#ffffff;"></div>
<div style="left:624px;top:304px;width:14px;height:1px;background:#808080;"></div>
<div style="left:637px;top:291px;width:1px;height:14px;background:#808080;"></div>
<div style="left:6px;top:367px;width:617px;height:16px;background:#ffffff;background-image:conic-gradient(#d4d0c8 25%,#fff 0 50%,#d4d0c8 0 75%,#fff 0);background-size:2px 2px;"></div>
<div style="left:6px;top:367px;width:16px;height:16px;background:#d4d0c8;"></div>
<div style="left:6px;top:367px;width:16px;height:1px;background:#d4d0c8;"></div>
<div style="left:6px;top:367px;width:1px;height:16px;background:#d4d0c8;"></div>
<div style="left:6px;top:382px;width:16px;height:1px;background:#404040;"></div>
<div style="left:21px;top:367px;width:1px;height:16px;background:#404040;"></div>
<div style="left:7px;top:368px;width:14px;height:1px;background:#ffffff;"></div>
<div style="left:7px;top:368px;width:1px;height:14px;background:#ffffff;"></div>
<div style="left:7px;top:381px;width:14px;height:1px;background:#808080;"></div>
<div style="left:20px;top:368px;width:1px;height:14px;background:#808080;"></div>
<div style="left:607px;top:367px;width:16px;height:16px;background:#d4d0c8;"></div>
<div style="left:607px;top:367px;width:16px;height:1px;background:#d4d0c8;"></div>
<div style="left:607px;top:367px;width:1px;height:16px;background:#d4d0c8;"></div>
<div style="left:607px;top:382px;width:16px;height:1px;background:#404040;"></div>
<div style="left:622px;top:367px;width:1px;height:16px;background:#404040;"></div>
<div style="left:608px;top:368px;width:14px;height:1px;background:#ffffff;"></div>
<div style="left:608px;top:368px;width:1px;height:14px;background:#ffffff;"></div>
<div style="left:608px;top:381px;width:14px;height:1px;background:#808080;"></div>
<div style="left:621px;top:368px;width:1px;height:14px;background:#808080;"></div>
<div style="left:11px;top:374px;width:1px;height:1px;background:#000;"></div>
<div style="left:12px;top:373px;width:1px;height:3px;background:#000;"></div>
<div style="left:13px;top:372px;width:1px;height:5px;background:#000;"></div>
<div style="left:14px;top:371px;width:1px;height:7px;background:#000;"></div>
<div style="left:613px;top:371px;width:1px;height:7px;background:#000;"></div>
<div style="left:614px;top:372px;width:1px;height:5px;background:#000;"></div>
<div style="left:615px;top:373px;width:1px;height:3px;background:#000;"></div>
<div style="left:616px;top:374px;width:1px;height:1px;background:#000;"></div>
<div style="left:22px;top:367px;width:16px;height:16px;background:#d4d0c8;"></div>
<div style="left:22px;top:367px;width:16px;height:1px;background:#d4d0c8;"></div>
<div style="left:22px;top:367px;width:1px;height:16px;background:#d4d0c8;"></div>
<div style="left:22px;top:382px;width:16px;height:1px;background:#404040;"></div>
<div style="left:37px;top:367px;width:1px;height:16px;background:#404040;"></div>
<div style="left:23px;top:368px;width:14px;height:1px;background:#ffffff;"></div>
<div style="left:23px;top:368px;width:1px;height:14px;background:#ffffff;"></div>
<div style="left:23px;top:381px;width:14px;height:1px;background:#808080;"></div>
<div style="left:36px;top:368px;width:1px;height:14px;background:#808080;"></div>
<div style="left:623px;top:367px;width:16px;height:16px;background:#d4d0c8;"></div>
<div style="left:6px;top:274px;width:617px;height:13px;background:#d4d0c8;"></div>
<div style="left:6px;top:274px;width:617px;height:1px;background:#ffffff;"></div>
<div style="left:6px;top:287px;width:617px;height:1px;background:#000;"></div>
<div style="left:24px;top:274px;width:1px;height:13px;background:#000;"></div>
<div style="left:25px;top:275px;width:1px;height:12px;background:#ffffff;"></div>
<div style="left:120px;top:274px;width:1px;height:13px;background:#000;"></div>
<div style="left:121px;top:275px;width:1px;height:12px;background:#ffffff;"></div>
<div style="left:180px;top:274px;width:1px;height:13px;background:#000;"></div>
<div style="left:181px;top:275px;width:1px;height:12px;background:#ffffff;"></div>
<div style="left:6px;top:275px;width:1px;height:12px;background:#ffffff;"></div>
<div style="left:6px;top:288px;width:18px;height:13px;background:#d4d0c8;"></div>
<div style="left:6px;top:288px;width:18px;height:1px;background:#ffffff;"></div>
<div style="left:6px;top:288px;width:1px;height:13px;background:#ffffff;"></div>
<div style="left:6px;top:301px;width:19px;height:1px;background:#000;"></div>
<div style="left:25px;top:301px;width:598px;height:1px;background:#d4d0c8;"></div>
<div style="left:6px;top:302px;width:18px;height:13px;background:#d4d0c8;"></div>
<div style="left:6px;top:302px;width:18px;height:1px;background:#ffffff;"></div>
<div style="left:6px;top:302px;width:1px;height:13px;background:#ffffff;"></div>
<div style="left:6px;top:315px;width:19px;height:1px;background:#000;"></div>
<div style="left:25px;top:315px;width:598px;height:1px;background:#d4d0c8;"></div>
<div style="left:6px;top:316px;width:18px;height:13px;background:#d4d0c8;"></div>
<div style="left:6px;top:316px;width:18px;height:1px;background:#ffffff;"></div>
<div style="left:6px;top:316px;width:1px;height:13px;background:#ffffff;"></div>
<div style="left:6px;top:329px;width:19px;height:1px;background:#000;"></div>
<div style="left:25px;top:329px;width:598px;height:1px;background:#d4d0c8;"></div>
<div style="left:6px;top:330px;width:18px;height:13px;background:#d4d0c8;"></div>
<div style="left:6px;top:330px;width:18px;height:1px;background:#ffffff;"></div>
<div style="left:6px;top:330px;width:1px;height:13px;background:#ffffff;"></div>
<div style="left:6px;top:343px;width:19px;height:1px;background:#000;"></div>
<div style="left:25px;top:343px;width:598px;height:1px;background:#d4d0c8;"></div>
<div style="left:6px;top:344px;width:18px;height:13px;background:#d4d0c8;"></div>
<div style="left:6px;top:344px;width:18px;height:1px;background:#ffffff;"></div>
<div style="left:6px;top:344px;width:1px;height:13px;background:#ffffff;"></div>
<div style="left:6px;top:357px;width:19px;height:1px;background:#000;"></div>
<div style="left:25px;top:357px;width:598px;height:1px;background:#d4d0c8;"></div>
<div style="left:6px;top:358px;width:18px;height:9px;background:#d4d0c8;"></div>
<div style="left:6px;top:358px;width:18px;height:1px;background:#ffffff;"></div>
<div style="left:6px;top:358px;width:1px;height:9px;background:#ffffff;"></div>
<div style="left:24px;top:288px;width:1px;height:79px;background:#000;"></div>
<div style="left:120px;top:288px;width:1px;height:79px;background:#000;"></div>
<div style="left:180px;top:288px;width:1px;height:79px;background:#d4d0c8;"></div>
<div class="t" style="left:27.0px;top:275px;color:#000;transform:scaleX(0.8938);transform-origin:0 0;">Column</div>
<div class="t" style="left:123.0px;top:275px;color:#000;transform:scaleX(0.8878);transform-origin:0 0;">Alias</div>
<div class="t" style="left:183.0px;top:275px;color:#000;transform:scaleX(0.9533);transform-origin:0 0;">Table</div>
<div style="left:28px;top:289px;width:75px;height:13px;overflow:hidden">
<div class="t" style="left:-1.0px;top:0px;color:#000;transform:scaleX(0.9084);transform-origin:0 0;">Cr</div>
</div>
<div class="t" style="left:184.0px;top:289px;color:#000;transform:scaleX(0.9549);transform-origin:0 0;">Oper</div>
<div style="left:28px;top:303px;width:75px;height:13px;overflow:hidden">
<div class="t" style="left:-1.0px;top:0px;color:#000;transform:scaleX(0.9016);transform-origin:0 0;">YEAR(OperDate</div>
</div>
<div class="t" style="left:123.0px;top:303px;color:#000;transform:scaleX(0.9399);transform-origin:0 0;">CrYear</div>
<div style="left:28px;top:317px;width:75px;height:13px;overflow:hidden">
<div class="t" style="left:-1.0px;top:0px;color:#000;transform:scaleX(0.8982);transform-origin:0 0;">MONTH(OperDate</div>
</div>
<div class="t" style="left:123.0px;top:317px;color:#000;transform:scaleX(0.9372);transform-origin:0 0;">CrMonth</div>
<div style="left:28px;top:331px;width:75px;height:13px;overflow:hidden">
<div class="t" style="left:-1.0px;top:0px;color:#000;transform:scaleX(1.1973);transform-origin:0 0;">*</div>
</div>
<div class="t" style="left:123.0px;top:331px;color:#000;transform:scaleX(0.9694);transform-origin:0 0;">Cnt</div>
<div style="left:28px;top:345px;width:75px;height:13px;overflow:hidden">
<div class="t" style="left:-1.0px;top:0px;color:#000;transform:scaleX(0.9382);transform-origin:0 0;">OperSum</div>
</div>
<div class="t" style="left:123.0px;top:345px;color:#000;transform:scaleX(0.9459);transform-origin:0 0;">CrSum</div>
<div class="t" style="left:184.0px;top:345px;color:#000;transform:scaleX(0.9549);transform-origin:0 0;">Oper</div>
<div style="left:6px;top:383px;width:633px;height:5px;background:#d4d0c8;"></div>
<div style="left:6px;top:384px;width:632px;height:1px;background:#ffffff;"></div>
<div style="left:6px;top:387px;width:632px;height:1px;background:#808080;"></div>
<div style="left:638px;top:385px;width:1px;height:3px;background:#808080;"></div>
<div style="left:6px;top:388px;width:633px;height:75px;background:#fffbf0;"></div>
<div style="left:623px;top:388px;width:16px;height:59px;background:#ffffff;background-image:conic-gradient(#d4d0c8 25%,#fff 0 50%,#d4d0c8 0 75%,#fff 0);background-size:2px 2px;"></div>
<div style="left:623px;top:388px;width:16px;height:16px;background:#d4d0c8;"></div>
<div style="left:623px;top:388px;width:16px;height:1px;background:#d4d0c8;"></div>
<div style="left:623px;top:388px;width:1px;height:16px;background:#d4d0c8;"></div>
<div style="left:623px;top:403px;width:16px;height:1px;background:#404040;"></div>
<div style="left:638px;top:388px;width:1px;height:16px;background:#404040;"></div>
<div style="left:624px;top:389px;width:14px;height:1px;background:#ffffff;"></div>
<div style="left:624px;top:389px;width:1px;height:14px;background:#ffffff;"></div>
<div style="left:624px;top:402px;width:14px;height:1px;background:#808080;"></div>
<div style="left:637px;top:389px;width:1px;height:14px;background:#808080;"></div>
<div style="left:623px;top:431px;width:16px;height:16px;background:#d4d0c8;"></div>
<div style="left:623px;top:431px;width:16px;height:1px;background:#d4d0c8;"></div>
<div style="left:623px;top:431px;width:1px;height:16px;background:#d4d0c8;"></div>
<div style="left:623px;top:446px;width:16px;height:1px;background:#404040;"></div>
<div style="left:638px;top:431px;width:1px;height:16px;background:#404040;"></div>
<div style="left:624px;top:432px;width:14px;height:1px;background:#ffffff;"></div>
<div style="left:624px;top:432px;width:1px;height:14px;background:#ffffff;"></div>
<div style="left:624px;top:445px;width:14px;height:1px;background:#808080;"></div>
<div style="left:637px;top:432px;width:1px;height:14px;background:#808080;"></div>
<div style="left:631px;top:395px;width:1px;height:1px;background:#ffffff;"></div>
<div style="left:630px;top:396px;width:3px;height:1px;background:#ffffff;"></div>
<div style="left:629px;top:397px;width:5px;height:1px;background:#ffffff;"></div>
<div style="left:628px;top:398px;width:7px;height:1px;background:#ffffff;"></div>
<div style="left:630px;top:394px;width:1px;height:1px;background:#808080;"></div>
<div style="left:629px;top:395px;width:3px;height:1px;background:#808080;"></div>
<div style="left:628px;top:396px;width:5px;height:1px;background:#808080;"></div>
<div style="left:627px;top:397px;width:7px;height:1px;background:#808080;"></div>
<div style="left:628px;top:438px;width:7px;height:1px;background:#ffffff;"></div>
<div style="left:629px;top:439px;width:5px;height:1px;background:#ffffff;"></div>
<div style="left:630px;top:440px;width:3px;height:1px;background:#ffffff;"></div>
<div style="left:631px;top:441px;width:1px;height:1px;background:#ffffff;"></div>
<div style="left:627px;top:437px;width:7px;height:1px;background:#808080;"></div>
<div style="left:628px;top:438px;width:5px;height:1px;background:#808080;"></div>
<div style="left:629px;top:439px;width:3px;height:1px;background:#808080;"></div>
<div style="left:630px;top:440px;width:1px;height:1px;background:#808080;"></div>
<div style="left:6px;top:447px;width:617px;height:16px;background:#ffffff;background-image:conic-gradient(#d4d0c8 25%,#fff 0 50%,#d4d0c8 0 75%,#fff 0);background-size:2px 2px;"></div>
<div style="left:6px;top:447px;width:16px;height:16px;background:#d4d0c8;"></div>
<div style="left:6px;top:447px;width:16px;height:1px;background:#d4d0c8;"></div>
<div style="left:6px;top:447px;width:1px;height:16px;background:#d4d0c8;"></div>
<div style="left:6px;top:462px;width:16px;height:1px;background:#404040;"></div>
<div style="left:21px;top:447px;width:1px;height:16px;background:#404040;"></div>
<div style="left:7px;top:448px;width:14px;height:1px;background:#ffffff;"></div>
<div style="left:7px;top:448px;width:1px;height:14px;background:#ffffff;"></div>
<div style="left:7px;top:461px;width:14px;height:1px;background:#808080;"></div>
<div style="left:20px;top:448px;width:1px;height:14px;background:#808080;"></div>
<div style="left:607px;top:447px;width:16px;height:16px;background:#d4d0c8;"></div>
<div style="left:607px;top:447px;width:16px;height:1px;background:#d4d0c8;"></div>
<div style="left:607px;top:447px;width:1px;height:16px;background:#d4d0c8;"></div>
<div style="left:607px;top:462px;width:16px;height:1px;background:#404040;"></div>
<div style="left:622px;top:447px;width:1px;height:16px;background:#404040;"></div>
<div style="left:608px;top:448px;width:14px;height:1px;background:#ffffff;"></div>
<div style="left:608px;top:448px;width:1px;height:14px;background:#ffffff;"></div>
<div style="left:608px;top:461px;width:14px;height:1px;background:#808080;"></div>
<div style="left:621px;top:448px;width:1px;height:14px;background:#808080;"></div>
<div style="left:12px;top:455px;width:1px;height:1px;background:#ffffff;"></div>
<div style="left:13px;top:454px;width:1px;height:3px;background:#ffffff;"></div>
<div style="left:14px;top:453px;width:1px;height:5px;background:#ffffff;"></div>
<div style="left:15px;top:452px;width:1px;height:7px;background:#ffffff;"></div>
<div style="left:11px;top:454px;width:1px;height:1px;background:#808080;"></div>
<div style="left:12px;top:453px;width:1px;height:3px;background:#808080;"></div>
<div style="left:13px;top:452px;width:1px;height:5px;background:#808080;"></div>
<div style="left:14px;top:451px;width:1px;height:7px;background:#808080;"></div>
<div style="left:614px;top:452px;width:1px;height:7px;background:#ffffff;"></div>
<div style="left:615px;top:453px;width:1px;height:5px;background:#ffffff;"></div>
<div style="left:616px;top:454px;width:1px;height:3px;background:#ffffff;"></div>
<div style="left:617px;top:455px;width:1px;height:1px;background:#ffffff;"></div>
<div style="left:613px;top:451px;width:1px;height:7px;background:#808080;"></div>
<div style="left:614px;top:452px;width:1px;height:5px;background:#808080;"></div>
<div style="left:615px;top:453px;width:1px;height:3px;background:#808080;"></div>
<div style="left:616px;top:454px;width:1px;height:1px;background:#808080;"></div>
<div style="left:623px;top:447px;width:16px;height:16px;background:#d4d0c8;"></div>
<div class="t" style="left:8.0px;top:389px;color:#000;transform:scaleX(0.8185);transform-origin:0 0;">SELECT</div>
<div class="t" style="left:59.0px;top:389px;color:#000;transform:scaleX(0.9157);transform-origin:0 0;">Cr, YEAR(OperDate) AS CrYear, MONTH(OperDate) AS CrMonth, COUNT_BIG (*) AS Cnt, SUM(OperSum) AS CrSum</div>
<div class="t" style="left:8.0px;top:402px;color:#000;transform:scaleX(0.9972);transform-origin:0 0;">FROM</div>
<div class="t" style="left:64.0px;top:402px;color:#000;transform:scaleX(0.9841);transform-origin:0 0;">dbo.Oper</div>
<div class="t" style="left:8.0px;top:415px;color:#000;transform:scaleX(0.9071);transform-origin:0 0;">GROUP BY Cr, YEAR(OperDate), MONTH(OperDate)</div>
<div style="left:6px;top:463px;width:633px;height:5px;background:#d4d0c8;"></div>
<div style="left:6px;top:464px;width:632px;height:1px;background:#ffffff;"></div>
<div style="left:6px;top:467px;width:632px;height:1px;background:#808080;"></div>
<div style="left:638px;top:465px;width:1px;height:3px;background:#808080;"></div>
<div style="left:6px;top:468px;width:633px;height:40px;background:#fffbf0;"></div>
<div style="left:6px;top:468px;width:617px;height:13px;background:#d4d0c8;"></div>
<div style="left:6px;top:468px;width:617px;height:1px;background:#ffffff;"></div>
<div style="left:6px;top:468px;width:1px;height:13px;background:#ffffff;"></div>
<div style="left:6px;top:481px;width:617px;height:1px;background:#000;"></div>
<div style="left:6px;top:482px;width:18px;height:10px;background:#d4d0c8;"></div>
<div style="left:6px;top:482px;width:18px;height:1px;background:#ffffff;"></div>
<div style="left:6px;top:482px;width:1px;height:10px;background:#ffffff;"></div>
<div style="left:24px;top:468px;width:1px;height:24px;background:#000;"></div>
<div style="left:120px;top:468px;width:1px;height:13px;background:#000;"></div>
<div style="left:121px;top:469px;width:1px;height:12px;background:#ffffff;"></div>
<div style="left:120px;top:482px;width:1px;height:10px;background:#d4d0c8;"></div>
<div style="left:216px;top:468px;width:1px;height:13px;background:#000;"></div>
<div style="left:217px;top:469px;width:1px;height:12px;background:#ffffff;"></div>
<div style="left:216px;top:482px;width:1px;height:10px;background:#d4d0c8;"></div>
<div style="left:312px;top:468px;width:1px;height:13px;background:#000;"></div>
<div style="left:313px;top:469px;width:1px;height:12px;background:#ffffff;"></div>
<div style="left:312px;top:482px;width:1px;height:10px;background:#d4d0c8;"></div>
<div style="left:408px;top:468px;width:1px;height:13px;background:#000;"></div>
<div style="left:409px;top:469px;width:1px;height:12px;background:#ffffff;"></div>
<div style="left:408px;top:482px;width:1px;height:10px;background:#d4d0c8;"></div>
<div style="left:504px;top:468px;width:1px;height:13px;background:#000;"></div>
<div style="left:505px;top:469px;width:1px;height:12px;background:#ffffff;"></div>
<div style="left:504px;top:482px;width:1px;height:10px;background:#d4d0c8;"></div>
<div style="left:600px;top:468px;width:1px;height:13px;background:#000;"></div>
<div style="left:601px;top:469px;width:1px;height:12px;background:#ffffff;"></div>
<div style="left:600px;top:482px;width:1px;height:10px;background:#d4d0c8;"></div>
<div style="left:623px;top:468px;width:16px;height:12px;background:#d4d0c8;"></div>
<div style="left:623px;top:468px;width:16px;height:1px;background:#d4d0c8;"></div>
<div style="left:623px;top:468px;width:1px;height:12px;background:#d4d0c8;"></div>
<div style="left:623px;top:479px;width:16px;height:1px;background:#404040;"></div>
<div style="left:638px;top:468px;width:1px;height:12px;background:#404040;"></div>
<div style="left:624px;top:469px;width:14px;height:1px;background:#ffffff;"></div>
<div style="left:624px;top:469px;width:1px;height:10px;background:#ffffff;"></div>
<div style="left:624px;top:478px;width:14px;height:1px;background:#808080;"></div>
<div style="left:637px;top:469px;width:1px;height:10px;background:#808080;"></div>
<div style="left:630px;top:472px;width:1px;height:1px;background:#000;"></div>
<div style="left:629px;top:473px;width:3px;height:1px;background:#000;"></div>
<div style="left:628px;top:474px;width:5px;height:1px;background:#000;"></div>
<div style="left:623px;top:480px;width:16px;height:12px;background:#d4d0c8;"></div>
<div style="left:623px;top:480px;width:16px;height:1px;background:#d4d0c8;"></div>
<div style="left:623px;top:480px;width:1px;height:12px;background:#d4d0c8;"></div>
<div style="left:623px;top:491px;width:16px;height:1px;background:#404040;"></div>
<div style="left:638px;top:480px;width:1px;height:12px;background:#404040;"></div>
<div style="left:624px;top:481px;width:14px;height:1px;background:#ffffff;"></div>
<div style="left:624px;top:481px;width:1px;height:10px;background:#ffffff;"></div>
<div style="left:624px;top:490px;width:14px;height:1px;background:#808080;"></div>
<div style="left:637px;top:481px;width:1px;height:10px;background:#808080;"></div>
<div style="left:628px;top:484px;width:5px;height:1px;background:#000;"></div>
<div style="left:629px;top:485px;width:3px;height:1px;background:#000;"></div>
<div style="left:630px;top:486px;width:1px;height:1px;background:#000;"></div>
<div style="left:6px;top:492px;width:617px;height:16px;background:#ffffff;background-image:conic-gradient(#d4d0c8 25%,#fff 0 50%,#d4d0c8 0 75%,#fff 0);background-size:2px 2px;"></div>
<div style="left:6px;top:492px;width:16px;height:16px;background:#d4d0c8;"></div>
<div style="left:6px;top:492px;width:16px;height:1px;background:#d4d0c8;"></div>
<div style="left:6px;top:492px;width:1px;height:16px;background:#d4d0c8;"></div>
<div style="left:6px;top:507px;width:16px;height:1px;background:#404040;"></div>
<div style="left:21px;top:492px;width:1px;height:16px;background:#404040;"></div>
<div style="left:7px;top:493px;width:14px;height:1px;background:#ffffff;"></div>
<div style="left:7px;top:493px;width:1px;height:14px;background:#ffffff;"></div>
<div style="left:7px;top:506px;width:14px;height:1px;background:#808080;"></div>
<div style="left:20px;top:493px;width:1px;height:14px;background:#808080;"></div>
<div style="left:607px;top:492px;width:16px;height:16px;background:#d4d0c8;"></div>
<div style="left:607px;top:492px;width:16px;height:1px;background:#d4d0c8;"></div>
<div style="left:607px;top:492px;width:1px;height:16px;background:#d4d0c8;"></div>
<div style="left:607px;top:507px;width:16px;height:1px;background:#404040;"></div>
<div style="left:622px;top:492px;width:1px;height:16px;background:#404040;"></div>
<div style="left:608px;top:493px;width:14px;height:1px;background:#ffffff;"></div>
<div style="left:608px;top:493px;width:1px;height:14px;background:#ffffff;"></div>
<div style="left:608px;top:506px;width:14px;height:1px;background:#808080;"></div>
<div style="left:621px;top:493px;width:1px;height:14px;background:#808080;"></div>
<div style="left:11px;top:499px;width:1px;height:1px;background:#000;"></div>
<div style="left:12px;top:498px;width:1px;height:3px;background:#000;"></div>
<div style="left:13px;top:497px;width:1px;height:5px;background:#000;"></div>
<div style="left:14px;top:496px;width:1px;height:7px;background:#000;"></div>
<div style="left:613px;top:496px;width:1px;height:7px;background:#000;"></div>
<div style="left:614px;top:497px;width:1px;height:5px;background:#000;"></div>
<div style="left:615px;top:498px;width:1px;height:3px;background:#000;"></div>
<div style="left:616px;top:499px;width:1px;height:1px;background:#000;"></div>
<div style="left:22px;top:492px;width:16px;height:16px;background:#d4d0c8;"></div>
<div style="left:22px;top:492px;width:16px;height:1px;background:#d4d0c8;"></div>
<div style="left:22px;top:492px;width:1px;height:16px;background:#d4d0c8;"></div>
<div style="left:22px;top:507px;width:16px;height:1px;background:#404040;"></div>
<div style="left:37px;top:492px;width:1px;height:16px;background:#404040;"></div>
<div style="left:23px;top:493px;width:14px;height:1px;background:#ffffff;"></div>
<div style="left:23px;top:493px;width:1px;height:14px;background:#ffffff;"></div>
<div style="left:23px;top:506px;width:14px;height:1px;background:#808080;"></div>
<div style="left:36px;top:493px;width:1px;height:14px;background:#808080;"></div>
<div style="left:623px;top:492px;width:16px;height:16px;background:#d4d0c8;"></div>
<div style="left:4px;top:512px;width:417px;height:1px;background:#808080;"></div>
<div style="left:4px;top:512px;width:1px;height:18px;background:#808080;"></div>
<div style="left:4px;top:529px;width:417px;height:1px;background:#ffffff;"></div>
<div style="left:420px;top:512px;width:1px;height:18px;background:#ffffff;"></div>
<div style="left:423px;top:512px;width:131px;height:1px;background:#808080;"></div>
<div style="left:423px;top:512px;width:1px;height:18px;background:#808080;"></div>
<div style="left:423px;top:529px;width:131px;height:1px;background:#ffffff;"></div>
<div style="left:553px;top:512px;width:1px;height:18px;background:#ffffff;"></div>
<div style="left:556px;top:512px;width:84px;height:1px;background:#808080;"></div>
<div style="left:556px;top:512px;width:1px;height:18px;background:#808080;"></div>
<div style="left:556px;top:529px;width:84px;height:1px;background:#ffffff;"></div>
<div style="left:639px;top:512px;width:1px;height:18px;background:#ffffff;"></div>
<div style="left:628px;top:528px;width:1px;height:1px;background:#ffffff;"></div>
<div style="left:629px;top:528px;width:1px;height:1px;background:#808080;"></div>
<div style="left:630px;top:528px;width:1px;height:1px;background:#808080;"></div>
<div style="left:629px;top:527px;width:1px;height:1px;background:#ffffff;"></div>
<div style="left:630px;top:527px;width:1px;height:1px;background:#808080;"></div>
<div style="left:631px;top:527px;width:1px;height:1px;background:#808080;"></div>
<div style="left:630px;top:526px;width:1px;height:1px;background:#ffffff;"></div>
<div style="left:631px;top:526px;width:1px;height:1px;background:#808080;"></div>
<div style="left:632px;top:526px;width:1px;height:1px;background:#808080;"></div>
<div style="left:631px;top:525px;width:1px;height:1px;background:#ffffff;"></div>
<div style="left:632px;top:525px;width:1px;height:1px;background:#808080;"></div>
<div style="left:633px;top:525px;width:1px;height:1px;background:#808080;"></div>
<div style="left:632px;top:524px;width:1px;height:1px;background:#ffffff;"></div>
<div style="left:633px;top:524px;width:1px;height:1px;background:#808080;"></div>
<div style="left:634px;top:524px;width:1px;height:1px;background:#808080;"></div>
<div style="left:633px;top:523px;width:1px;height:1px;background:#ffffff;"></div>
<div style="left:634px;top:523px;width:1px;height:1px;background:#808080;"></div>
<div style="left:635px;top:523px;width:1px;height:1px;background:#808080;"></div>
<div style="left:634px;top:522px;width:1px;height:1px;background:#ffffff;"></div>
<div style="left:635px;top:522px;width:1px;height:1px;background:#808080;"></div>
<div style="left:636px;top:522px;width:1px;height:1px;background:#808080;"></div>
<div style="left:635px;top:521px;width:1px;height:1px;background:#ffffff;"></div>
<div style="left:636px;top:521px;width:1px;height:1px;background:#808080;"></div>
<div style="left:637px;top:521px;width:1px;height:1px;background:#808080;"></div>
<div style="left:636px;top:520px;width:1px;height:1px;background:#ffffff;"></div>
<div style="left:637px;top:520px;width:1px;height:1px;background:#808080;"></div>
<div style="left:638px;top:520px;width:1px;height:1px;background:#808080;"></div>
<div style="left:637px;top:519px;width:1px;height:1px;background:#ffffff;"></div>
<div style="left:638px;top:519px;width:1px;height:1px;background:#808080;"></div>
<div style="left:639px;top:519px;width:1px;height:1px;background:#808080;"></div>
<div style="left:638px;top:518px;width:1px;height:1px;background:#ffffff;"></div>
<div style="left:639px;top:518px;width:1px;height:1px;background:#808080;"></div>
<div style="left:640px;top:518px;width:1px;height:1px;background:#808080;"></div>
<div style="left:639px;top:517px;width:1px;height:1px;background:#ffffff;"></div>
<div style="left:640px;top:517px;width:1px;height:1px;background:#808080;"></div>
<div style="left:641px;top:517px;width:1px;height:1px;background:#808080;"></div>
<div style="left:632px;top:528px;width:1px;height:1px;background:#ffffff;"></div>
<div style="left:633px;top:528px;width:1px;height:1px;background:#808080;"></div>
<div style="left:634px;top:528px;width:1px;height:1px;background:#808080;"></div>
<div style="left:633px;top:527px;width:1px;height:1px;background:#ffffff;"></div>
<div style="left:634px;top:527px;width:1px;height:1px;background:#808080;"></div>
<div style="left:635px;top:527px;width:1px;height:1px;background:#808080;"></div>
<div style="left:634px;top:526px;width:1px;height:1px;background:#ffffff;"></div>
<div style="left:635px;top:526px;width:1px;height:1px;background:#808080;"></div>
<div style="left:636px;top:526px;width:1px;height:1px;background:#808080;"></div>
<div style="left:635px;top:525px;width:1px;height:1px;background:#ffffff;"></div>
<div style="left:636px;top:525px;width:1px;height:1px;background:#808080;"></div>
<div style="left:637px;top:525px;width:1px;height:1px;background:#808080;"></div>
<div style="left:636px;top:524px;width:1px;height:1px;background:#ffffff;"></div>
<div style="left:637px;top:524px;width:1px;height:1px;background:#808080;"></div>
<div style="left:638px;top:524px;width:1px;height:1px;background:#808080;"></div>
<div style="left:637px;top:523px;width:1px;height:1px;background:#ffffff;"></div>
<div style="left:638px;top:523px;width:1px;height:1px;background:#808080;"></div>
<div style="left:639px;top:523px;width:1px;height:1px;background:#808080;"></div>
<div style="left:638px;top:522px;width:1px;height:1px;background:#ffffff;"></div>
<div style="left:639px;top:522px;width:1px;height:1px;background:#808080;"></div>
<div style="left:640px;top:522px;width:1px;height:1px;background:#808080;"></div>
<div style="left:639px;top:521px;width:1px;height:1px;background:#ffffff;"></div>
<div style="left:640px;top:521px;width:1px;height:1px;background:#808080;"></div>
<div style="left:641px;top:521px;width:1px;height:1px;background:#808080;"></div>
<div style="left:636px;top:528px;width:1px;height:1px;background:#ffffff;"></div>
<div style="left:637px;top:528px;width:1px;height:1px;background:#808080;"></div>
<div style="left:638px;top:528px;width:1px;height:1px;background:#808080;"></div>
<div style="left:637px;top:527px;width:1px;height:1px;background:#ffffff;"></div>
<div style="left:638px;top:527px;width:1px;height:1px;background:#808080;"></div>
<div style="left:639px;top:527px;width:1px;height:1px;background:#808080;"></div>
<div style="left:638px;top:526px;width:1px;height:1px;background:#ffffff;"></div>
<div style="left:639px;top:526px;width:1px;height:1px;background:#808080;"></div>
<div style="left:640px;top:526px;width:1px;height:1px;background:#808080;"></div>
<div style="left:639px;top:525px;width:1px;height:1px;background:#ffffff;"></div>
<div style="left:640px;top:525px;width:1px;height:1px;background:#808080;"></div>
<div style="left:641px;top:525px;width:1px;height:1px;background:#808080;"></div>
<div style="left:640px;top:513px;width:2px;height:18px;background:#d4d0c8;"></div>
<div style="left:226px;top:29px;width:383px;height:339px;background:#d4d0c8;"></div>
<div style="left:226px;top:29px;width:383px;height:1px;background:#d4d0c8;"></div>
<div style="left:226px;top:29px;width:1px;height:339px;background:#d4d0c8;"></div>
<div style="left:226px;top:367px;width:383px;height:1px;background:#404040;"></div>
<div style="left:608px;top:29px;width:1px;height:339px;background:#404040;"></div>
<div style="left:227px;top:30px;width:381px;height:1px;background:#ffffff;"></div>
<div style="left:227px;top:30px;width:1px;height:337px;background:#ffffff;"></div>
<div style="left:227px;top:366px;width:381px;height:1px;background:#808080;"></div>
<div style="left:607px;top:30px;width:1px;height:337px;background:#808080;"></div>
<div style="left:229px;top:32px;width:377px;height:18px;background:;background:linear-gradient(to right,#0a246a,#a6caf0);"></div>
<div class="t" style="left:230.0px;top:35px;color:#fff;font-weight:bold;transform:scaleX(1.0701);transform-origin:0 0;">Indexes</div>
<div style="left:588px;top:34px;width:16px;height:14px;background:#d4d0c8;"></div>
<div style="left:588px;top:34px;width:16px;height:1px;background:#ffffff;"></div>
<div style="left:588px;top:34px;width:1px;height:14px;background:#ffffff;"></div>
<div style="left:588px;top:47px;width:16px;height:1px;background:#404040;"></div>
<div style="left:603px;top:34px;width:1px;height:14px;background:#404040;"></div>
<div style="left:589px;top:35px;width:14px;height:1px;background:#d4d0c8;"></div>
<div style="left:589px;top:35px;width:1px;height:12px;background:#d4d0c8;"></div>
<div style="left:589px;top:46px;width:14px;height:1px;background:#808080;"></div>
<div style="left:602px;top:35px;width:1px;height:12px;background:#808080;"></div>
<div style="left:592px;top:37px;width:2px;height:1px;background:#000;"></div>
<div style="left:598px;top:37px;width:2px;height:1px;background:#000;"></div>
<div style="left:593px;top:38px;width:2px;height:1px;background:#000;"></div>
<div style="left:597px;top:38px;width:2px;height:1px;background:#000;"></div>
<div style="left:594px;top:39px;width:2px;height:1px;background:#000;"></div>
<div style="left:596px;top:39px;width:2px;height:1px;background:#000;"></div>
<div style="left:595px;top:40px;width:2px;height:1px;background:#000;"></div>
<div style="left:595px;top:40px;width:2px;height:1px;background:#000;"></div>
<div style="left:596px;top:41px;width:2px;height:1px;background:#000;"></div>
<div style="left:594px;top:41px;width:2px;height:1px;background:#000;"></div>
<div style="left:597px;top:42px;width:2px;height:1px;background:#000;"></div>
<div style="left:593px;top:42px;width:2px;height:1px;background:#000;"></div>
<div style="left:598px;top:43px;width:2px;height:1px;background:#000;"></div>
<div style="left:592px;top:43px;width:2px;height:1px;background:#000;"></div>
<div class="t" style="left:236.0px;top:68px;color:#000;transform:scaleX(0.9345);transform-origin:0 0;">Selected index:</div>
<div style="left:339px;top:64px;width:257px;height:21px;background:#fffbf0;"></div>
<div style="left:339px;top:64px;width:257px;height:1px;background:#808080;"></div>
<div style="left:339px;top:64px;width:1px;height:21px;background:#808080;"></div>
<div style="left:339px;top:84px;width:257px;height:1px;background:#ffffff;"></div>
<div style="left:595px;top:64px;width:1px;height:21px;background:#ffffff;"></div>
<div style="left:340px;top:65px;width:255px;height:1px;background:#404040;"></div>
<div style="left:340px;top:65px;width:1px;height:19px;background:#404040;"></div>
<div style="left:340px;top:83px;width:255px;height:1px;background:#d4d0c8;"></div>
<div style="left:594px;top:65px;width:1px;height:19px;background:#d4d0c8;"></div>
<div class="t" style="left:342.0px;top:69px;color:#000;transform:scaleX(0.9177);transform-origin:0 0;">IX_CrS</div>
<div style="left:578px;top:66px;width:16px;height:17px;background:#d4d0c8;"></div>
<div style="left:578px;top:66px;width:16px;height:1px;background:#d4d0c8;"></div>
<div style="left:578px;top:66px;width:1px;height:17px;background:#d4d0c8;"></div>
<div style="left:578px;top:82px;width:16px;height:1px;background:#404040;"></div>
<div style="left:593px;top:66px;width:1px;height:17px;background:#404040;"></div>
<div style="left:579px;top:67px;width:14px;height:1px;background:#ffffff;"></div>
<div style="left:579px;top:67px;width:1px;height:15px;background:#ffffff;"></div>
<div style="left:579px;top:81px;width:14px;height:1px;background:#808080;"></div>
<div style="left:592px;top:67px;width:1px;height:15px;background:#808080;"></div>
<div style="left:582px;top:72px;width:7px;height:1px;background:#000;"></div>
<div style="left:583px;top:73px;width:5px;height:1px;background:#000;"></div>
<div style="left:584px;top:74px;width:3px;height:1px;background:#000;"></div>
<div style="left:585px;top:75px;width:1px;height:1px;background:#000;"></div>
<div style="left:439px;top:90px;width:75px;height:23px;background:#d4d0c8;"></div>
<div style="left:439px;top:90px;width:75px;height:1px;background:#ffffff;"></div>
<div style="left:439px;top:90px;width:1px;height:23px;background:#ffffff;"></div>
<div style="left:439px;top:112px;width:75px;height:1px;background:#404040;"></div>
<div style="left:513px;top:90px;width:1px;height:23px;background:#404040;"></div>
<div style="left:440px;top:91px;width:73px;height:1px;background:#d4d0c8;"></div>
<div style="left:440px;top:91px;width:1px;height:21px;background:#d4d0c8;"></div>
<div style="left:440px;top:111px;width:73px;height:1px;background:#808080;"></div>
<div style="left:512px;top:91px;width:1px;height:21px;background:#808080;"></div>
<div class="t" style="left:465.0px;top:95px;color:#000;transform:scaleX(0.9823);transform-origin:0 0;">New</div>
<div style="left:520px;top:90px;width:75px;height:23px;background:#d4d0c8;"></div>
<div style="left:520px;top:90px;width:75px;height:1px;background:#ffffff;"></div>
<div style="left:520px;top:90px;width:1px;height:23px;background:#ffffff;"></div>
<div style="left:520px;top:112px;width:75px;height:1px;background:#404040;"></div>
<div style="left:594px;top:90px;width:1px;height:23px;background:#404040;"></div>
<div style="left:521px;top:91px;width:73px;height:1px;background:#d4d0c8;"></div>
<div style="left:521px;top:91px;width:1px;height:21px;background:#d4d0c8;"></div>
<div style="left:521px;top:111px;width:73px;height:1px;background:#808080;"></div>
<div style="left:593px;top:91px;width:1px;height:21px;background:#808080;"></div>
<div class="t" style="left:541.0px;top:95px;color:#000;transform:scaleX(0.9491);transform-origin:0 0;">Delete</div>
<div class="t" style="left:236.0px;top:124px;color:#000;transform:scaleX(0.9633);transform-origin:0 0;">Index name:</div>
<div style="left:339px;top:120px;width:257px;height:19px;background:#fffbf0;"></div>
<div style="left:339px;top:120px;width:257px;height:1px;background:#808080;"></div>
<div style="left:339px;top:120px;width:1px;height:19px;background:#808080;"></div>
<div style="left:339px;top:138px;width:257px;height:1px;background:#ffffff;"></div>
<div style="left:595px;top:120px;width:1px;height:19px;background:#ffffff;"></div>
<div style="left:340px;top:121px;width:255px;height:1px;background:#404040;"></div>
<div style="left:340px;top:121px;width:1px;height:17px;background:#404040;"></div>
<div style="left:340px;top:137px;width:255px;height:1px;background:#d4d0c8;"></div>
<div style="left:594px;top:121px;width:1px;height:17px;background:#d4d0c8;"></div>
<div class="t" style="left:342.0px;top:123px;color:#000;transform:scaleX(0.9177);transform-origin:0 0;">IX_CrS</div>
<div style="left:340px;top:146px;width:255px;height:73px;background:#fffbf0;"></div>
<div style="left:340px;top:146px;width:255px;height:1px;background:#808080;"></div>
<div style="left:340px;top:146px;width:1px;height:73px;background:#808080;"></div>
<div style="left:340px;top:218px;width:255px;height:1px;background:#ffffff;"></div>
<div style="left:594px;top:146px;width:1px;height:73px;background:#ffffff;"></div>
<div style="left:341px;top:147px;width:253px;height:1px;background:#404040;"></div>
<div style="left:341px;top:147px;width:1px;height:71px;background:#404040;"></div>
<div style="left:341px;top:217px;width:253px;height:1px;background:#d4d0c8;"></div>
<div style="left:593px;top:147px;width:1px;height:71px;background:#d4d0c8;"></div>
<div style="left:342px;top:148px;width:235px;height:69px;background:#fffbf0;"></div>
<div style="left:342px;top:148px;width:235px;height:13px;background:#d4d0c8;"></div>
<div style="left:342px;top:148px;width:235px;height:1px;background:#ffffff;"></div>
<div style="left:342px;top:148px;width:1px;height:13px;background:#ffffff;"></div>
<div style="left:342px;top:161px;width:235px;height:1px;background:#000;"></div>
<div style="left:482px;top:148px;width:1px;height:13px;background:#000;"></div>
<div style="left:483px;top:149px;width:1px;height:12px;background:#ffffff;"></div>
<div style="left:576px;top:148px;width:1px;height:14px;background:#000;"></div>
<div style="left:482px;top:162px;width:1px;height:55px;background:#d4d0c8;"></div>
<div style="left:342px;top:175px;width:235px;height:1px;background:#d4d0c8;"></div>
<div style="left:342px;top:189px;width:235px;height:1px;background:#d4d0c8;"></div>
<div style="left:342px;top:203px;width:235px;height:1px;background:#d4d0c8;"></div>
<div class="t" style="left:344.0px;top:149px;color:#000;transform:scaleX(0.8986);transform-origin:0 0;">Column name</div>
<div class="t" style="left:485.0px;top:149px;color:#000;transform:scaleX(0.9620);transform-origin:0 0;">Order</div>
<div class="t" style="left:344.0px;top:163px;color:#000;transform:scaleX(0.9084);transform-origin:0 0;">Cr</div>
<div style="left:356px;top:162px;width:2px;height:13px;background:#000;"></div>
<div style="left:466px;top:162px;width:16px;height:13px;background:#d4d0c8;"></div>
<div style="left:466px;top:162px;width:16px;height:1px;background:#d4d0c8;"></div>
<div style="left:466px;top:162px;width:1px;height:13px;background:#d4d0c8;"></div>
<div style="left:466px;top:174px;width:16px;height:1px;background:#404040;"></div>
<div style="left:481px;top:162px;width:1px;height:13px;background:#404040;"></div>
<div style="left:467px;top:163px;width:14px;height:1px;background:#ffffff;"></div>
<div style="left:467px;top:163px;width:1px;height:11px;background:#ffffff;"></div>
<div style="left:467px;top:173px;width:14px;height:1px;background:#808080;"></div>
<div style="left:480px;top:163px;width:1px;height:11px;background:#808080;"></div>
<div style="left:471px;top:167px;width:5px;height:1px;background:#000;"></div>
<div style="left:472px;top:168px;width:3px;height:1px;background:#000;"></div>
<div style="left:473px;top:169px;width:1px;height:1px;background:#000;"></div>
<div class="t" style="left:344.0px;top:177px;color:#000;transform:scaleX(0.9399);transform-origin:0 0;">CrYear</div>
<div class="t" style="left:344.0px;top:191px;color:#000;transform:scaleX(0.9372);transform-origin:0 0;">CrMonth</div>
<div class="t" style="left:485.0px;top:163px;color:#000;transform:scaleX(0.9153);transform-origin:0 0;">Ascending</div>
<div class="t" style="left:485.0px;top:177px;color:#000;transform:scaleX(0.9153);transform-origin:0 0;">Ascending</div>
<div class="t" style="left:485.0px;top:191px;color:#000;transform:scaleX(0.9153);transform-origin:0 0;">Ascending</div>
<div style="left:577px;top:148px;width:16px;height:70px;background:#ffffff;background-image:conic-gradient(#d4d0c8 25%,#fff 0 50%,#d4d0c8 0 75%,#fff 0);background-size:2px 2px;"></div>
<div style="left:577px;top:148px;width:16px;height:16px;background:#d4d0c8;"></div>
<div style="left:577px;top:148px;width:16px;height:1px;background:#d4d0c8;"></div>
<div style="left:577px;top:148px;width:1px;height:16px;background:#d4d0c8;"></div>
<div style="left:577px;top:163px;width:16px;height:1px;background:#404040;"></div>
<div style="left:592px;top:148px;width:1px;height:16px;background:#404040;"></div>
<div style="left:578px;top:149px;width:14px;height:1px;background:#ffffff;"></div>
<div style="left:578px;top:149px;width:1px;height:14px;background:#ffffff;"></div>
<div style="left:578px;top:162px;width:14px;height:1px;background:#808080;"></div>
<div style="left:591px;top:149px;width:1px;height:14px;background:#808080;"></div>
<div style="left:577px;top:202px;width:16px;height:16px;background:#d4d0c8;"></div>
<div style="left:577px;top:202px;width:16px;height:1px;background:#d4d0c8;"></div>
<div style="left:577px;top:202px;width:1px;height:16px;background:#d4d0c8;"></div>
<div style="left:577px;top:217px;width:16px;height:1px;background:#404040;"></div>
<div style="left:592px;top:202px;width:1px;height:16px;background:#404040;"></div>
<div style="left:578px;top:203px;width:14px;height:1px;background:#ffffff;"></div>
<div style="left:578px;top:203px;width:1px;height:14px;background:#ffffff;"></div>
<div style="left:578px;top:216px;width:14px;height:1px;background:#808080;"></div>
<div style="left:591px;top:203px;width:1px;height:14px;background:#808080;"></div>
<div style="left:584px;top:154px;width:1px;height:1px;background:#000;"></div>
<div style="left:583px;top:155px;width:3px;height:1px;background:#000;"></div>
<div style="left:582px;top:156px;width:5px;height:1px;background:#000;"></div>
<div style="left:581px;top:157px;width:7px;height:1px;background:#000;"></div>
<div style="left:581px;top:208px;width:7px;height:1px;background:#000;"></div>
<div style="left:582px;top:209px;width:5px;height:1px;background:#000;"></div>
<div style="left:583px;top:210px;width:3px;height:1px;background:#000;"></div>
<div style="left:584px;top:211px;width:1px;height:1px;background:#000;"></div>
<div style="left:577px;top:164px;width:16px;height:16px;background:#d4d0c8;"></div>
<div style="left:577px;top:164px;width:16px;height:1px;background:#d4d0c8;"></div>
<div style="left:577px;top:164px;width:1px;height:16px;background:#d4d0c8;"></div>
<div style="left:577px;top:179px;width:16px;height:1px;background:#404040;"></div>
<div style="left:592px;top:164px;width:1px;height:16px;background:#404040;"></div>
<div style="left:578px;top:165px;width:14px;height:1px;background:#ffffff;"></div>
<div style="left:578px;top:165px;width:1px;height:14px;background:#ffffff;"></div>
<div style="left:578px;top:178px;width:14px;height:1px;background:#808080;"></div>
<div style="left:591px;top:165px;width:1px;height:14px;background:#808080;"></div>
<div class="t" style="left:236.0px;top:237px;color:#000;transform:scaleX(0.9655);transform-origin:0 0;">Index file group:</div>
<div style="left:339px;top:233px;width:257px;height:21px;background:#fffbf0;"></div>
<div style="left:339px;top:233px;width:257px;height:1px;background:#808080;"></div>
<div style="left:339px;top:233px;width:1px;height:21px;background:#808080;"></div>
<div style="left:339px;top:253px;width:257px;height:1px;background:#ffffff;"></div>
<div style="left:595px;top:233px;width:1px;height:21px;background:#ffffff;"></div>
<div style="left:340px;top:234px;width:255px;height:1px;background:#404040;"></div>
<div style="left:340px;top:234px;width:1px;height:19px;background:#404040;"></div>
<div style="left:340px;top:252px;width:255px;height:1px;background:#d4d0c8;"></div>
<div style="left:594px;top:234px;width:1px;height:19px;background:#d4d0c8;"></div>
<div class="t" style="left:342.0px;top:238px;color:#000;transform:scaleX(0.8841);transform-origin:0 0;">PRIMARY</div>
<div style="left:578px;top:235px;width:16px;height:17px;background:#d4d0c8;"></div>
<div style="left:578px;top:235px;width:16px;height:1px;background:#d4d0c8;"></div>
<div style="left:578px;top:235px;width:1px;height:17px;background:#d4d0c8;"></div>
<div style="left:578px;top:251px;width:16px;height:1px;background:#404040;"></div>
<div style="left:593px;top:235px;width:1px;height:17px;background:#404040;"></div>
<div style="left:579px;top:236px;width:14px;height:1px;background:#ffffff;"></div>
<div style="left:579px;top:236px;width:1px;height:15px;background:#ffffff;"></div>
<div style="left:579px;top:250px;width:14px;height:1px;background:#808080;"></div>
<div style="left:592px;top:236px;width:1px;height:15px;background:#808080;"></div>
<div style="left:582px;top:241px;width:7px;height:1px;background:#000;"></div>
<div style="left:583px;top:242px;width:5px;height:1px;background:#000;"></div>
<div style="left:584px;top:243px;width:3px;height:1px;background:#000;"></div>
<div style="left:585px;top:244px;width:1px;height:1px;background:#000;"></div>
<div style="left:247px;top:257px;width:13px;height:13px;background:#fffbf0;"></div>
<div style="left:247px;top:257px;width:13px;height:1px;background:#808080;"></div>
<div style="left:247px;top:257px;width:1px;height:13px;background:#808080;"></div>
<div style="left:247px;top:269px;width:13px;height:1px;background:#ffffff;"></div>
<div style="left:259px;top:257px;width:1px;height:13px;background:#ffffff;"></div>
<div style="left:248px;top:258px;width:11px;height:1px;background:#404040;"></div>
<div style="left:248px;top:258px;width:1px;height:11px;background:#404040;"></div>
<div style="left:248px;top:268px;width:11px;height:1px;background:#d4d0c8;"></div>
<div style="left:258px;top:258px;width:1px;height:11px;background:#d4d0c8;"></div>
<div style="left:256px;top:260px;width:1px;height:1px;background:#000;"></div>
<div style="left:255px;top:261px;width:1px;height:1px;background:#000;"></div>
<div style="left:256px;top:261px;width:1px;height:1px;background:#000;"></div>
<div style="left:250px;top:262px;width:1px;height:1px;background:#000;"></div>
<div style="left:254px;top:262px;width:1px;height:1px;background:#000;"></div>
<div style="left:255px;top:262px;width:1px;height:1px;background:#000;"></div>
<div style="left:256px;top:262px;width:1px;height:1px;background:#000;"></div>
<div style="left:250px;top:263px;width:1px;height:1px;background:#000;"></div>
<div style="left:251px;top:263px;width:1px;height:1px;background:#000;"></div>
<div style="left:253px;top:263px;width:1px;height:1px;background:#000;"></div>
<div style="left:254px;top:263px;width:1px;height:1px;background:#000;"></div>
<div style="left:255px;top:263px;width:1px;height:1px;background:#000;"></div>
<div style="left:250px;top:264px;width:1px;height:1px;background:#000;"></div>
<div style="left:251px;top:264px;width:1px;height:1px;background:#000;"></div>
<div style="left:252px;top:264px;width:1px;height:1px;background:#000;"></div>
<div style="left:253px;top:264px;width:1px;height:1px;background:#000;"></div>
<div style="left:254px;top:264px;width:1px;height:1px;background:#000;"></div>
<div style="left:251px;top:265px;width:1px;height:1px;background:#000;"></div>
<div style="left:252px;top:265px;width:1px;height:1px;background:#000;"></div>
<div style="left:253px;top:265px;width:1px;height:1px;background:#000;"></div>
<div style="left:252px;top:266px;width:1px;height:1px;background:#000;"></div>
<div class="t" style="left:264.0px;top:258px;color:#000;transform:scaleX(0.9122);transform-origin:0 0;">Create UNIQUE</div>
<div style="left:247px;top:274px;width:13px;height:13px;background:#fffbf0;"></div>
<div style="left:247px;top:274px;width:13px;height:1px;background:#808080;"></div>
<div style="left:247px;top:274px;width:1px;height:13px;background:#808080;"></div>
<div style="left:247px;top:286px;width:13px;height:1px;background:#ffffff;"></div>
<div style="left:259px;top:274px;width:1px;height:13px;background:#ffffff;"></div>
<div style="left:248px;top:275px;width:11px;height:1px;background:#404040;"></div>
<div style="left:248px;top:275px;width:1px;height:11px;background:#404040;"></div>
<div style="left:248px;top:285px;width:11px;height:1px;background:#d4d0c8;"></div>
<div style="left:258px;top:275px;width:1px;height:11px;background:#d4d0c8;"></div>
<div class="t" style="left:264.0px;top:275px;color:#000;transform:scaleX(0.9430);transform-origin:0 0;">Ignore duplicate key</div>
<div style="left:247px;top:290px;width:13px;height:13px;background:#fffbf0;"></div>
<div style="left:247px;top:290px;width:13px;height:1px;background:#808080;"></div>
<div style="left:247px;top:290px;width:1px;height:13px;background:#808080;"></div>
<div style="left:247px;top:302px;width:13px;height:1px;background:#ffffff;"></div>
<div style="left:259px;top:290px;width:1px;height:13px;background:#ffffff;"></div>
<div style="left:248px;top:291px;width:11px;height:1px;background:#404040;"></div>
<div style="left:248px;top:291px;width:1px;height:11px;background:#404040;"></div>
<div style="left:248px;top:301px;width:11px;height:1px;background:#d4d0c8;"></div>
<div style="left:258px;top:291px;width:1px;height:11px;background:#d4d0c8;"></div>
<div style="left:256px;top:293px;width:1px;height:1px;background:#000;"></div>
<div style="left:255px;top:294px;width:1px;height:1px;background:#000;"></div>
<div style="left:256px;top:294px;width:1px;height:1px;background:#000;"></div>
<div style="left:250px;top:295px;width:1px;height:1px;background:#000;"></div>
<div style="left:254px;top:295px;width:1px;height:1px;background:#000;"></div>
<div style="left:255px;top:295px;width:1px;height:1px;background:#000;"></div>
<div style="left:256px;top:295px;width:1px;height:1px;background:#000;"></div>
<div style="left:250px;top:296px;width:1px;height:1px;background:#000;"></div>
<div style="left:251px;top:296px;width:1px;height:1px;background:#000;"></div>
<div style="left:253px;top:296px;width:1px;height:1px;background:#000;"></div>
<div style="left:254px;top:296px;width:1px;height:1px;background:#000;"></div>
<div style="left:255px;top:296px;width:1px;height:1px;background:#000;"></div>
<div style="left:250px;top:297px;width:1px;height:1px;background:#000;"></div>
<div style="left:251px;top:297px;width:1px;height:1px;background:#000;"></div>
<div style="left:252px;top:297px;width:1px;height:1px;background:#000;"></div>
<div style="left:253px;top:297px;width:1px;height:1px;background:#000;"></div>
<div style="left:254px;top:297px;width:1px;height:1px;background:#000;"></div>
<div style="left:251px;top:298px;width:1px;height:1px;background:#000;"></div>
<div style="left:252px;top:298px;width:1px;height:1px;background:#000;"></div>
<div style="left:253px;top:298px;width:1px;height:1px;background:#000;"></div>
<div style="left:252px;top:299px;width:1px;height:1px;background:#000;"></div>
<div class="t" style="left:264.0px;top:291px;color:#000;transform:scaleX(0.8767);transform-origin:0 0;">Create as CLUSTERED</div>
<div style="left:247px;top:306px;width:13px;height:13px;background:#fffbf0;"></div>
<div style="left:247px;top:306px;width:13px;height:1px;background:#808080;"></div>
<div style="left:247px;top:306px;width:1px;height:13px;background:#808080;"></div>
<div style="left:247px;top:318px;width:13px;height:1px;background:#ffffff;"></div>
<div style="left:259px;top:306px;width:1px;height:13px;background:#ffffff;"></div>
<div style="left:248px;top:307px;width:11px;height:1px;background:#404040;"></div>
<div style="left:248px;top:307px;width:1px;height:11px;background:#404040;"></div>
<div style="left:248px;top:317px;width:11px;height:1px;background:#d4d0c8;"></div>
<div style="left:258px;top:307px;width:1px;height:11px;background:#d4d0c8;"></div>
<div class="t" style="left:264.0px;top:307px;color:#000;transform:scaleX(0.9306);transform-origin:0 0;">Do not automatically recompute statistics</div>
<div class="t" style="left:503.0px;top:258px;color:#000;transform:scaleX(0.9360);transform-origin:0 0;">Fill factor:</div>
<div style="left:504px;top:274px;width:38px;height:20px;background:#fffbf0;"></div>
<div style="left:504px;top:274px;width:38px;height:1px;background:#808080;"></div>
<div style="left:504px;top:274px;width:1px;height:20px;background:#808080;"></div>
<div style="left:504px;top:293px;width:38px;height:1px;background:#ffffff;"></div>
<div style="left:541px;top:274px;width:1px;height:20px;background:#ffffff;"></div>
<div style="left:505px;top:275px;width:36px;height:1px;background:#404040;"></div>
<div style="left:505px;top:275px;width:1px;height:18px;background:#404040;"></div>
<div style="left:505px;top:292px;width:36px;height:1px;background:#d4d0c8;"></div>
<div style="left:540px;top:275px;width:1px;height:18px;background:#d4d0c8;"></div>
<div class="t" style="left:507.0px;top:278px;color:#000;transform:scaleX(1.0900);transform-origin:0 0;">0</div>
<div class="t" style="left:546.0px;top:278px;color:#000;transform:scaleX(1.1393);transform-origin:0 0;">%</div>
<div style="left:504px;top:298px;width:13px;height:13px;background:#d4d0c8;"></div>
<div style="left:504px;top:298px;width:13px;height:1px;background:#808080;"></div>
<div style="left:504px;top:298px;width:1px;height:13px;background:#808080;"></div>
<div style="left:504px;top:310px;width:13px;height:1px;background:#ffffff;"></div>
<div style="left:516px;top:298px;width:1px;height:13px;background:#ffffff;"></div>
<div style="left:505px;top:299px;width:11px;height:1px;background:#404040;"></div>
<div style="left:505px;top:299px;width:1px;height:11px;background:#404040;"></div>
<div style="left:505px;top:309px;width:11px;height:1px;background:#d4d0c8;"></div>
<div style="left:515px;top:299px;width:1px;height:11px;background:#d4d0c8;"></div>
<div class="t" style="left:522.0px;top:300px;color:#fff;transform:scaleX(0.9665);transform-origin:0 0;">Pad Index</div>
<div class="t" style="left:521.0px;top:299px;color:#808080;transform:scaleX(0.9665);transform-origin:0 0;">Pad Index</div>
<div style="left:354px;top:334px;width:75px;height:23px;background:#000;"></div>
<div style="left:355px;top:335px;width:73px;height:21px;background:#d4d0c8;"></div>
<div style="left:355px;top:335px;width:73px;height:1px;background:#ffffff;"></div>
<div style="left:355px;top:335px;width:1px;height:21px;background:#ffffff;"></div>
<div style="left:355px;top:355px;width:73px;height:1px;background:#404040;"></div>
<div style="left:427px;top:335px;width:1px;height:21px;background:#404040;"></div>
<div style="left:356px;top:336px;width:71px;height:1px;background:#d4d0c8;"></div>
<div style="left:356px;top:336px;width:1px;height:19px;background:#d4d0c8;"></div>
<div style="left:356px;top:354px;width:71px;height:1px;background:#808080;"></div>
<div style="left:426px;top:336px;width:1px;height:19px;background:#808080;"></div>
<div class="t" style="left:383.0px;top:339px;color:#000;transform:scaleX(0.8909);transform-origin:0 0;">OK</div>
<div style="left:438px;top:334px;width:75px;height:23px;background:#d4d0c8;"></div>
<div style="left:438px;top:334px;width:75px;height:1px;background:#ffffff;"></div>
<div style="left:438px;top:334px;width:1px;height:23px;background:#ffffff;"></div>
<div style="left:438px;top:356px;width:75px;height:1px;background:#404040;"></div>
<div style="left:512px;top:334px;width:1px;height:23px;background:#404040;"></div>
<div style="left:439px;top:335px;width:73px;height:1px;background:#d4d0c8;"></div>
<div style="left:439px;top:335px;width:1px;height:21px;background:#d4d0c8;"></div>
<div style="left:439px;top:355px;width:73px;height:1px;background:#808080;"></div>
<div style="left:511px;top:335px;width:1px;height:21px;background:#808080;"></div>
<div class="t" style="left:458.0px;top:339px;color:#000;transform:scaleX(0.9293);transform-origin:0 0;">Cancel</div>
<div style="left:522px;top:334px;width:75px;height:23px;background:#d4d0c8;"></div>
<div style="left:522px;top:334px;width:75px;height:1px;background:#ffffff;"></div>
<div style="left:522px;top:334px;width:1px;height:23px;background:#ffffff;"></div>
<div style="left:522px;top:356px;width:75px;height:1px;background:#404040;"></div>
<div style="left:596px;top:334px;width:1px;height:23px;background:#404040;"></div>
<div style="left:523px;top:335px;width:73px;height:1px;background:#d4d0c8;"></div>
<div style="left:523px;top:335px;width:1px;height:21px;background:#d4d0c8;"></div>
<div style="left:523px;top:355px;width:73px;height:1px;background:#808080;"></div>
<div style="left:595px;top:335px;width:1px;height:21px;background:#808080;"></div>
<div class="t" style="left:547.0px;top:339px;color:#000;transform:scaleX(0.9275);transform-origin:0 0;">Help</div>
</div></body></html>
